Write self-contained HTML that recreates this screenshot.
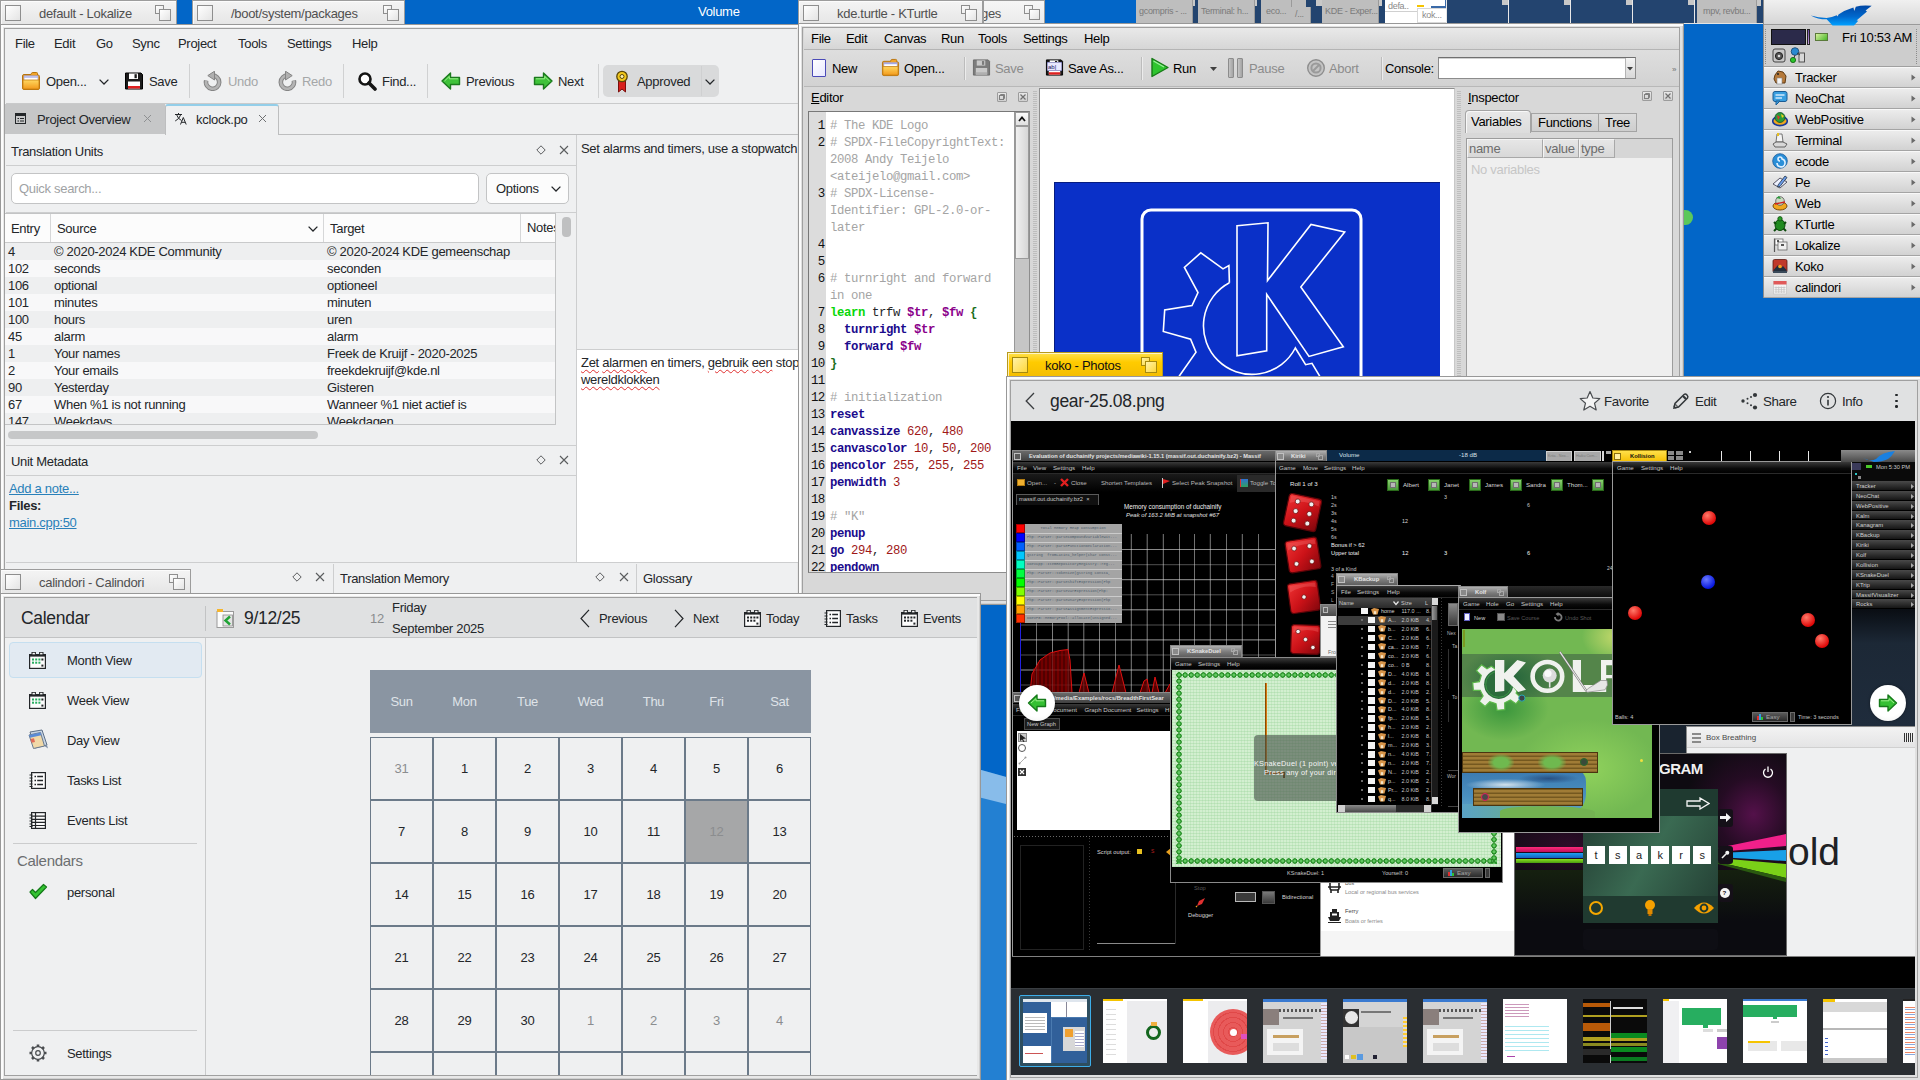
<!DOCTYPE html>
<html><head><meta charset="utf-8"><title>desktop</title>
<style>
html,body{margin:0;padding:0}
body{width:1920px;height:1080px;overflow:hidden;position:relative;background:#0266c8;font-family:"Liberation Sans",sans-serif;font-size:13px;color:#232629}
.a{position:absolute;box-sizing:border-box}
.t{position:absolute;white-space:pre;font-size:13px;letter-spacing:-.3px;line-height:16px;color:#232629}
.m{position:absolute;white-space:pre;font-family:"Liberation Mono",monospace;font-size:12.3px;letter-spacing:-.38px;line-height:17px;color:#232629}
.g{color:#9a9b9c}
.w{overflow:hidden}
</style></head><body>

<svg class="a" style="left:976px;top:740px" width="40" height="340" viewBox="976 740 40 340"><path d="M976 768.6L1016 779.8V1080H976Z" fill="#2380d2"/><path d="M976 768.6L1016 779.8V806.5L976 796.4Z" fill="#88bcea"/></svg>
<div class="a" style="left:0px;top:0px;width:177px;height:24px;background:linear-gradient(#f4f4f4,#e6e6e6);border:1px solid #9c9c9c;border-bottom:none;box-shadow:inset 1px 1px 0 rgba(255,255,255,.7)"></div>
<div class="a" style="left:5px;top:5px;width:16px;height:16px;background:linear-gradient(135deg,#ffffff,#e4e4e4);border:1px solid #8e8e8e"></div>
<div class="a" style="left:155px;top:5px;width:9px;height:9px;background:linear-gradient(135deg,#ffffff,#e4e4e4);border:1px solid #8e8e8e"></div>
<div class="a" style="left:159px;top:9px;width:12px;height:12px;background:linear-gradient(135deg,#ffffff,#e4e4e4);border:1px solid #8e8e8e"></div>
<span class="t" style="left:39px;top:6px;color:#505050">default - Lokalize</span>
<div class="a" style="left:192px;top:0px;width:213px;height:24px;background:linear-gradient(#f4f4f4,#e6e6e6);border:1px solid #9c9c9c;border-bottom:none;box-shadow:inset 1px 1px 0 rgba(255,255,255,.7)"></div>
<div class="a" style="left:197px;top:5px;width:16px;height:16px;background:linear-gradient(135deg,#ffffff,#e4e4e4);border:1px solid #8e8e8e"></div>
<div class="a" style="left:383px;top:5px;width:9px;height:9px;background:linear-gradient(135deg,#ffffff,#e4e4e4);border:1px solid #8e8e8e"></div>
<div class="a" style="left:387px;top:9px;width:12px;height:12px;background:linear-gradient(135deg,#ffffff,#e4e4e4);border:1px solid #8e8e8e"></div>
<span class="t" style="left:231px;top:6px;color:#505050">/boot/system/packages</span>
<span class="t" style="left:698px;top:4px;color:#fff">Volume</span>
<div class="a" style="left:0px;top:24px;width:801px;height:600px;background:#e8e8e8;border:1px solid #989898;box-shadow:inset 2px 2px 0 #fcfcfc, inset -1px -1px 0 #d0d0d0"></div>
<div class="a" style="left:4px;top:28px;width:793px;height:592px;border:1px solid #a0a0a0;background:transparent"></div>
<div class="a" style="left:5px;top:29px;width:792px;height:590px;background:#eff0f1"></div>
<span class="t" style="left:15px;top:36px;">File</span>
<span class="t" style="left:54px;top:36px;">Edit</span>
<span class="t" style="left:96px;top:36px;">Go</span>
<span class="t" style="left:132px;top:36px;">Sync</span>
<span class="t" style="left:178px;top:36px;">Project</span>
<span class="t" style="left:238px;top:36px;">Tools</span>
<span class="t" style="left:287px;top:36px;">Settings</span>
<span class="t" style="left:352px;top:36px;">Help</span>
<svg class="a" style="left:21px;top:71px;" width="20" height="20" viewBox="0 0 20 20"><defs><linearGradient id="fo" x1="0" y1="0" x2="0" y2="1"><stop offset="0" stop-color="#ffd860"/><stop offset="1" stop-color="#f39a1c"/></linearGradient></defs>
<path d="M1.5 5 L1.5 17 Q1.5 18.5 3 18.5 L17 18.5 Q18.5 18.5 18.5 17 L18.5 5.5 Q18.5 4 17 4 L16.5 4 L16.5 2.5 Q16.5 1.5 15.5 1.5L11.5 1.5 Q10.8 1.5 10.5 2.2 L10 3.5 L3 3.5 Q1.5 3.5 1.5 5Z" fill="#f0a42a" stroke="#b8740e" stroke-width="1"/>
<rect x="3" y="4.8" width="14" height="4.5" fill="#fff" stroke="#8a8ac8" stroke-width=".6"/><path d="M3.3 6H16.7" stroke="#6a72d8" stroke-width=".8"/>
<path d="M2 9 L18 9 L18 17 Q18 18 17 18 L3 18 Q2 18 2 17Z" fill="url(#fo)" stroke="#c98212" stroke-width=".8"/></svg>
<span class="t" style="left:46px;top:74px;">Open...</span>
<svg class="a" style="left:99px;top:79px;" width="10" height="6" viewBox="0 0 10 6"><path d="M.6 .6 L5.0 5 L9.4 .6" fill="none" stroke="#232629" stroke-width="1.3"/></svg>
<svg class="a" style="left:124px;top:71px;" width="20" height="20" viewBox="0 0 20 20"><path d="M1.5 2 L17 2 L18.5 3.5 L18.5 18 L1.5 18Z" fill="#1b1b1b" stroke="#000" stroke-width="1"/>
<rect x="5" y="2.5" width="9" height="5.5" fill="#ffffff"/><rect x="10.5" y="3.2" width="2.3" height="4" fill="#1b1b1b"/>
<rect x="4" y="10.5" width="12" height="7" fill="#ffffff"/><rect x="4" y="15" width="12" height="2.5" fill="#e02020"/></svg>
<span class="t" style="left:149px;top:74px;">Save</span>
<div class="a" style="left:189px;top:64px;width:1px;height:34px;background:#d0d1d2"></div>
<svg class="a" style="left:203px;top:71px;" width="20" height="20" viewBox="0 0 20 20"><g ><path d="M3.2 9.5 A6.6 6.6 0 1 0 9 4.6" fill="none" stroke="#858585" stroke-width="4.6"/>
<path d="M3.2 9.5 A6.6 6.6 0 1 0 9 4.6" fill="none" stroke="#b4b4b4" stroke-width="2.6"/>
<path d="M11.5 .2 L11.5 9 L4.8 4.6Z" fill="#b0b0b0" stroke="#858585" stroke-width="1" stroke-linejoin="round"/></g></svg>
<span class="t" style="left:228px;top:74px;color:#a5a7a8">Undo</span>
<svg class="a" style="left:277px;top:71px;" width="20" height="20" viewBox="0 0 20 20"><g transform="translate(20,0) scale(-1,1)"><path d="M3.2 9.5 A6.6 6.6 0 1 0 9 4.6" fill="none" stroke="#858585" stroke-width="4.6"/>
<path d="M3.2 9.5 A6.6 6.6 0 1 0 9 4.6" fill="none" stroke="#b4b4b4" stroke-width="2.6"/>
<path d="M11.5 .2 L11.5 9 L4.8 4.6Z" fill="#b0b0b0" stroke="#858585" stroke-width="1" stroke-linejoin="round"/></g></svg>
<span class="t" style="left:302px;top:74px;color:#a5a7a8">Redo</span>
<div class="a" style="left:343px;top:64px;width:1px;height:34px;background:#d0d1d2"></div>
<svg class="a" style="left:357px;top:71px;" width="20" height="20" viewBox="0 0 20 20"><circle cx="8" cy="8" r="5.5" fill="#fff" stroke="#151515" stroke-width="2.6"/>
<path d="M12 12 L18 18" stroke="#151515" stroke-width="3.6" stroke-linecap="round"/></svg>
<span class="t" style="left:382px;top:74px;">Find...</span>
<div class="a" style="left:427px;top:64px;width:1px;height:34px;background:#d0d1d2"></div>
<svg class="a" style="left:441px;top:71px;" width="20" height="20" viewBox="0 0 20 20"><g ><path d="M1 10 L9.5 2 L9.5 6.5 L18.5 6.5 L18.5 13.5 L9.5 13.5 L9.5 18Z" fill="#3fc23a" stroke="#1b7a1d" stroke-width="1.4" stroke-linejoin="round"/>
<path d="M3.5 10 L8.3 5.4 L8.3 7.8 L17.2 7.8" fill="none" stroke="#9cf08a" stroke-width="1"/></g></svg>
<span class="t" style="left:466px;top:74px;">Previous</span>
<svg class="a" style="left:533px;top:71px;" width="20" height="20" viewBox="0 0 20 20"><g transform="translate(20,0) scale(-1,1)"><path d="M1 10 L9.5 2 L9.5 6.5 L18.5 6.5 L18.5 13.5 L9.5 13.5 L9.5 18Z" fill="#3fc23a" stroke="#1b7a1d" stroke-width="1.4" stroke-linejoin="round"/>
<path d="M3.5 10 L8.3 5.4 L8.3 7.8 L17.2 7.8" fill="none" stroke="#9cf08a" stroke-width="1"/></g></svg>
<span class="t" style="left:558px;top:74px;">Next</span>
<div class="a" style="left:598px;top:64px;width:1px;height:34px;background:#d0d1d2"></div>
<div class="a" style="left:603px;top:65px;width:116px;height:32px;background:#d9dadb;border-radius:5px"></div>
<div class="a" style="left:701px;top:66px;width:1px;height:30px;background:#cfd0d1"></div>
<svg class="a" style="left:615px;top:70px;" width="14" height="24" viewBox="0 0 14 24"><path d="M3.5 9 L3.5 22 L7 19 L10.5 22 L10.5 9Z" fill="#d8201c" stroke="#7a0e0c" stroke-width="1"/>
<circle cx="7" cy="6.5" r="5.2" fill="#f2c81c" stroke="#5a4708" stroke-width="1.3"/><circle cx="7" cy="6.5" r="2" fill="#fff4b0" stroke="#5a4708" stroke-width="1"/></svg>
<span class="t" style="left:637px;top:74px;">Approved</span>
<svg class="a" style="left:705px;top:79px;" width="10" height="6" viewBox="0 0 10 6"><path d="M.6 .6 L5.0 5 L9.4 .6" fill="none" stroke="#232629" stroke-width="1.3"/></svg>
<div class="a" style="left:6px;top:103px;width:792px;height:1px;background:#c9cacb"></div>
<div class="a" style="left:5px;top:104px;width:160px;height:30px;background:#c6c7c8"></div>
<div class="a" style="left:165px;top:104px;width:114px;height:31px;background:#eff0f1;border:1px solid #bdbebf;border-bottom:none;border-top:2px solid #93cee9;border-radius:3px 3px 0 0"></div>
<div class="a" style="left:278px;top:134px;width:520px;height:1px;background:#bdbebf"></div>
<svg class="a" style="left:15px;top:113px;" width="11" height="11" viewBox="0 0 11 11"><rect x=".5" y=".5" width="10" height="10" fill="none" stroke="#232629"/><rect x=".5" y=".5" width="10" height="2.5" fill="#232629"/><path d="M2.5 5.5H4M5 5.5H9M2.5 8H4M5 8H9" stroke="#232629"/></svg>
<span class="t" style="left:37px;top:112px;">Project Overview</span>
<svg class="a" style="left:143px;top:114px;" width="9" height="9" viewBox="0 0 9 9"><path d="M1 1 L8 8 M8 1 L1 8" stroke="#8e9092" stroke-width="1"/></svg>
<svg class="a" style="left:174px;top:112px;" width="13" height="13" viewBox="0 0 13 13"><path d="M1 2.5H8M4.5 1V2.5M2.5 2.5Q4 7 7.5 8.5M6.8 2.5Q5.5 7 1.2 9" fill="none" stroke="#232629" stroke-width="1"/><path d="M6.5 12.5L9.3 5.5L12.2 12.5M7.5 10.3H11.2" fill="none" stroke="#232629" stroke-width="1"/></svg>
<span class="t" style="left:196px;top:112px;">kclock.po</span>
<svg class="a" style="left:258px;top:114px;" width="9" height="9" viewBox="0 0 9 9"><path d="M1 1 L8 8 M8 1 L1 8" stroke="#6e7072" stroke-width="1"/></svg>
<span class="t" style="left:11px;top:144px;">Translation Units</span>
<svg class="a" style="left:536px;top:145px;" width="10" height="10" viewBox="0 0 10 10"><path d="M5 .8 L9.2 5 L5 9.2 L.8 5Z" fill="none" stroke="#5a5c5e" stroke-width="1"/></svg>
<svg class="a" style="left:559px;top:145px;" width="10" height="10" viewBox="0 0 10 10"><path d="M1 1 L9 9 M9 1 L1 9" fill="none" stroke="#5a5c5e" stroke-width="1.1"/></svg>
<div class="a" style="left:6px;top:165px;width:570px;height:1px;background:#cdcecf"></div>
<div class="a" style="left:11px;top:173px;width:468px;height:31px;background:#fff;border:1px solid #c3c4c5;border-radius:5px"></div>
<span class="t" style="left:19px;top:181px;color:#a0a2a4">Quick search...</span>
<div class="a" style="left:486px;top:173px;width:83px;height:31px;background:#fcfcfc;border:1px solid #c3c4c5;border-radius:5px"></div>
<span class="t" style="left:496px;top:181px;">Options</span>
<svg class="a" style="left:551px;top:186px;" width="10" height="6" viewBox="0 0 10 6"><path d="M.6 .6 L5.0 5 L9.4 .6" fill="none" stroke="#232629" stroke-width="1.3"/></svg>
<div class="a" style="left:6px;top:212px;width:570px;height:1px;background:#cdcecf"></div>
<div class="a" style="left:5px;top:213px;width:551px;height:212px;background:#fcfcfc;border:1px solid #c3c4c5;border-left:none"></div>
<div class="a" style="left:5px;top:242px;width:550px;height:1px;background:#c9cacb"></div>
<div class="a" style="left:50px;top:214px;width:1px;height:28px;background:#d6d7d8"></div>
<div class="a" style="left:323px;top:214px;width:1px;height:28px;background:#d6d7d8"></div>
<div class="a" style="left:520px;top:214px;width:1px;height:28px;background:#d6d7d8"></div>
<span class="t" style="left:11px;top:221px;">Entry</span>
<span class="t" style="left:57px;top:221px;">Source</span>
<svg class="a" style="left:308px;top:226px;" width="10" height="6" viewBox="0 0 10 6"><path d="M.6 .6 L5.0 5 L9.4 .6" fill="none" stroke="#232629" stroke-width="1.3"/></svg>
<span class="t" style="left:330px;top:221px;">Target</span>
<div class="a w" style="left:521px;top:214px;width:34px;height:28px"><span class="t" style="left:6px;top:6px">Notes</span></div>
<div class="a w" style="left:5px;top:243px;width:550px;height:181px">
<div class="a" style="left:0;top:0px;width:550px;height:17px;background:#eeeff0"></div>
<span class="t" style="left:3px;top:1px">4</span>
<span class="t" style="left:49px;top:1px">© 2020-2024 KDE Community</span>
<span class="t" style="left:322px;top:1px">© 2020-2024 KDE gemeenschap</span>
<div class="a" style="left:0;top:17px;width:550px;height:17px;background:#f8f8f9"></div>
<span class="t" style="left:3px;top:18px">102</span>
<span class="t" style="left:49px;top:18px">seconds</span>
<span class="t" style="left:322px;top:18px">seconden</span>
<div class="a" style="left:0;top:34px;width:550px;height:17px;background:#eeeff0"></div>
<span class="t" style="left:3px;top:35px">106</span>
<span class="t" style="left:49px;top:35px">optional</span>
<span class="t" style="left:322px;top:35px">optioneel</span>
<div class="a" style="left:0;top:51px;width:550px;height:17px;background:#f8f8f9"></div>
<span class="t" style="left:3px;top:52px">101</span>
<span class="t" style="left:49px;top:52px">minutes</span>
<span class="t" style="left:322px;top:52px">minuten</span>
<div class="a" style="left:0;top:68px;width:550px;height:17px;background:#eeeff0"></div>
<span class="t" style="left:3px;top:69px">100</span>
<span class="t" style="left:49px;top:69px">hours</span>
<span class="t" style="left:322px;top:69px">uren</span>
<div class="a" style="left:0;top:85px;width:550px;height:17px;background:#f8f8f9"></div>
<span class="t" style="left:3px;top:86px">45</span>
<span class="t" style="left:49px;top:86px">alarm</span>
<span class="t" style="left:322px;top:86px">alarm</span>
<div class="a" style="left:0;top:102px;width:550px;height:17px;background:#eeeff0"></div>
<span class="t" style="left:3px;top:103px">1</span>
<span class="t" style="left:49px;top:103px">Your names</span>
<span class="t" style="left:322px;top:103px">Freek de Kruijf - 2020-2025</span>
<div class="a" style="left:0;top:119px;width:550px;height:17px;background:#f8f8f9"></div>
<span class="t" style="left:3px;top:120px">2</span>
<span class="t" style="left:49px;top:120px">Your emails</span>
<span class="t" style="left:322px;top:120px">freekdekruijf@kde.nl</span>
<div class="a" style="left:0;top:136px;width:550px;height:17px;background:#eeeff0"></div>
<span class="t" style="left:3px;top:137px">90</span>
<span class="t" style="left:49px;top:137px">Yesterday</span>
<span class="t" style="left:322px;top:137px">Gisteren</span>
<div class="a" style="left:0;top:153px;width:550px;height:17px;background:#f8f8f9"></div>
<span class="t" style="left:3px;top:154px">67</span>
<span class="t" style="left:49px;top:154px">When %1 is not running</span>
<span class="t" style="left:322px;top:154px">Wanneer %1 niet actief is</span>
<div class="a" style="left:0;top:170px;width:550px;height:17px;background:#eeeff0"></div>
<span class="t" style="left:3px;top:171px">147</span>
<span class="t" style="left:49px;top:171px">Weekdays</span>
<span class="t" style="left:322px;top:171px">Weekdagen</span>
</div>
<div class="a" style="left:562px;top:217px;width:9px;height:20px;background:#bfc0c1;border-radius:4px"></div>
<div class="a" style="left:8px;top:431px;width:310px;height:8px;background:#c6c7c8;border-radius:4px"></div>
<div class="a" style="left:6px;top:445px;width:570px;height:1px;background:#cdcecf"></div>
<span class="t" style="left:11px;top:454px;">Unit Metadata</span>
<svg class="a" style="left:536px;top:455px;" width="10" height="10" viewBox="0 0 10 10"><path d="M5 .8 L9.2 5 L5 9.2 L.8 5Z" fill="none" stroke="#5a5c5e" stroke-width="1"/></svg>
<svg class="a" style="left:559px;top:455px;" width="10" height="10" viewBox="0 0 10 10"><path d="M1 1 L9 9 M9 1 L1 9" fill="none" stroke="#5a5c5e" stroke-width="1.1"/></svg>
<div class="a" style="left:6px;top:475px;width:570px;height:1px;background:#cdcecf"></div>
<span class="t" style="left:9px;top:481px;color:#2980b9;text-decoration:underline">Add a note...</span>
<span class="t" style="left:9px;top:498px;font-weight:bold">Files:</span>
<span class="t" style="left:9px;top:515px;color:#2980b9;text-decoration:underline">main.cpp:50</span>
<div class="a" style="left:576px;top:135px;width:1px;height:428px;background:#cdcecf"></div>
<div class="a w" style="left:577px;top:135px;width:221px;height:215px"><span class="t" style="left:4px;top:6px">Set alarms and timers, use a stopwatch, and</span></div>
<div class="a" style="left:577px;top:349px;width:221px;height:1px;background:#cdcecf"></div>
<div class="a" style="left:577px;top:350px;width:221px;height:212px;background:#fff"></div>
<div class="a w" style="left:577px;top:350px;width:221px;height:60px"><span class="t" style="left:4px;top:5px"><u style="text-decoration:underline wavy #e03030 1px;text-underline-offset:2px">Zet</u> <u style="text-decoration:underline wavy #e03030 1px;text-underline-offset:2px">alarmen</u> en timers, <u style="text-decoration:underline wavy #e03030 1px;text-underline-offset:2px">gebruik</u> <u style="text-decoration:underline wavy #e03030 1px;text-underline-offset:2px">een</u> stopwatch</span><span class="t" style="left:4px;top:22px"><u style="text-decoration:underline wavy #e03030 1px;text-underline-offset:2px">wereldklokken</u></span></div>
<div class="a" style="left:6px;top:562px;width:792px;height:1px;background:#cdcecf"></div>
<svg class="a" style="left:292px;top:572px;" width="10" height="10" viewBox="0 0 10 10"><path d="M5 .8 L9.2 5 L5 9.2 L.8 5Z" fill="none" stroke="#5a5c5e" stroke-width="1"/></svg>
<svg class="a" style="left:315px;top:572px;" width="10" height="10" viewBox="0 0 10 10"><path d="M1 1 L9 9 M9 1 L1 9" fill="none" stroke="#5a5c5e" stroke-width="1.1"/></svg>
<div class="a" style="left:333px;top:564px;width:1px;height:29px;background:#cdcecf"></div>
<span class="t" style="left:340px;top:571px;">Translation Memory</span>
<svg class="a" style="left:595px;top:572px;" width="10" height="10" viewBox="0 0 10 10"><path d="M5 .8 L9.2 5 L5 9.2 L.8 5Z" fill="none" stroke="#5a5c5e" stroke-width="1"/></svg>
<svg class="a" style="left:619px;top:572px;" width="10" height="10" viewBox="0 0 10 10"><path d="M1 1 L9 9 M9 1 L1 9" fill="none" stroke="#5a5c5e" stroke-width="1.1"/></svg>
<div class="a" style="left:636px;top:564px;width:1px;height:29px;background:#cdcecf"></div>
<span class="t" style="left:643px;top:571px;">Glossary</span>
<div class="a" style="left:6px;top:593px;width:792px;height:1px;background:#b5b6b7"></div>
<div class="a" style="left:1136px;top:0px;width:627px;height:24px;background:#23446f"></div>
<div class="a" style="left:1136px;top:0px;width:57px;height:23px;background:#bebebe;border-right:1px solid #9a9a9a;overflow:hidden"><span class="t" style="left:3px;top:6px;font-size:9px;letter-spacing:-.3px;color:#7a7a7a;line-height:10px">gcompris - ...</span></div>
<div class="a" style="left:1193px;top:0px;width:2px;height:6px;background:#c8c8c8"></div>
<div class="a" style="left:1198px;top:0px;width:57px;height:23px;background:#bebebe;border-right:1px solid #9a9a9a;overflow:hidden"><span class="t" style="left:3px;top:6px;font-size:9px;letter-spacing:-.3px;color:#7a7a7a;line-height:10px">Terminal: h...</span></div>
<div class="a" style="left:1255px;top:0px;width:2px;height:6px;background:#c8c8c8"></div>
<div class="a" style="left:1261px;top:0px;width:31px;height:23px;background:#bebebe;border-right:1px solid #9a9a9a;overflow:hidden"><span class="t" style="left:5px;top:6px;font-size:9px;letter-spacing:-.3px;color:#7a7a7a;line-height:10px">eco...</span></div>
<div class="a" style="left:1291px;top:7px;width:20px;height:16px;background:#bebebe;border-right:1px solid #9a9a9a;overflow:hidden"><span class="t" style="left:4px;top:2px;font-size:9px;letter-spacing:-.3px;color:#7a7a7a;line-height:10px">/...</span></div>
<div class="a" style="left:1292px;top:0px;width:14px;height:7px;background:#bebebe"></div>
<div class="a" style="left:1316px;top:0px;width:6px;height:6px;background:#c8c8c8"></div>
<div class="a" style="left:1322px;top:0px;width:57px;height:23px;background:#bebebe;border-right:1px solid #9a9a9a;overflow:hidden"><span class="t" style="left:3px;top:6px;font-size:9px;letter-spacing:-.3px;color:#7a7a7a;line-height:10px">KDE - Exper...</span></div>
<div class="a" style="left:1379px;top:0px;width:3px;height:6px;background:#c8c8c8"></div>
<div class="a" style="left:1385px;top:0px;width:62px;height:23px;background:#fff"></div>
<div class="a" style="left:1385px;top:0px;width:32px;height:12px;background:#fff;border-bottom:1px solid #d0d0d0"><span class="t" style="left:3px;top:1px;font-size:9px;letter-spacing:-.3px;color:#7a7a7a;line-height:10px;color:#8a8a8a">defa..</span></div>
<div class="a" style="left:1417px;top:8px;width:30px;height:15px;background:#fff;border:1px solid #d8d8d8"><span class="t" style="left:4px;top:1px;font-size:9px;letter-spacing:-.3px;color:#7a7a7a;line-height:10px;color:#8a8a8a">kok...</span></div>
<div class="a" style="left:1417px;top:5px;width:7px;height:2px;background:#f5c400"></div>
<div class="a" style="left:1431px;top:0px;width:16px;height:8px;background:#fff;border-right:2px solid #3a6aa8;border-bottom:2px solid #3a6aa8"></div>
<div class="a" style="left:1508px;top:0px;width:1px;height:23px;background:#e8e8e8"></div>
<div class="a" style="left:1502px;top:0px;width:6px;height:5px;background:#c8c8c8"></div>
<div class="a" style="left:1570px;top:0px;width:1px;height:23px;background:#e8e8e8"></div>
<div class="a" style="left:1564px;top:0px;width:6px;height:5px;background:#c8c8c8"></div>
<div class="a" style="left:1632px;top:0px;width:1px;height:23px;background:#e8e8e8"></div>
<div class="a" style="left:1626px;top:0px;width:6px;height:5px;background:#c8c8c8"></div>
<div class="a" style="left:1694px;top:0px;width:1px;height:23px;background:#e8e8e8"></div>
<div class="a" style="left:1688px;top:0px;width:6px;height:5px;background:#c8c8c8"></div>
<div class="a" style="left:1446px;top:0px;width:1px;height:23px;background:#e8e8e8"></div>
<div class="a" style="left:1697px;top:0px;width:60px;height:23px;background:#bebebe;border-right:1px solid #9a9a9a;overflow:hidden"><span class="t" style="left:6px;top:6px;font-size:9px;letter-spacing:-.3px;color:#7a7a7a;line-height:10px">mpv, revbu...</span></div>
<div class="a" style="left:1757px;top:0px;width:4px;height:6px;background:#c8c8c8"></div>
<div class="a" style="left:1136px;top:23px;width:627px;height:1px;background:#e4e4e4"></div>
<div class="a" style="left:983px;top:0px;width:62px;height:24px;background:linear-gradient(#f6f6f6,#ebebeb);border:1px solid #9c9c9c;border-bottom:none"></div>
<div class="a" style="left:1024px;top:5px;width:9px;height:9px;background:linear-gradient(135deg,#fff,#e4e4e4);border:1px solid #8e8e8e"></div>
<div class="a" style="left:1029px;top:9px;width:11px;height:11px;background:linear-gradient(135deg,#fff,#e4e4e4);border:1px solid #8e8e8e"></div>
<div class="a w" style="left:984px;top:2px;width:40px;height:20px"><span class="t" style="left:-3px;top:4px;color:#505050">ges</span></div>
<div class="a" style="left:798px;top:0px;width:185px;height:24px;background:linear-gradient(#f4f4f4,#e6e6e6);border:1px solid #9c9c9c;border-bottom:none;box-shadow:inset 1px 1px 0 rgba(255,255,255,.7)"></div>
<div class="a" style="left:803px;top:5px;width:16px;height:16px;background:linear-gradient(135deg,#ffffff,#e4e4e4);border:1px solid #8e8e8e"></div>
<div class="a" style="left:961px;top:5px;width:9px;height:9px;background:linear-gradient(135deg,#ffffff,#e4e4e4);border:1px solid #8e8e8e"></div>
<div class="a" style="left:965px;top:9px;width:12px;height:12px;background:linear-gradient(135deg,#ffffff,#e4e4e4);border:1px solid #8e8e8e"></div>
<span class="t" style="left:837px;top:6px;color:#505050">kde.turtle - KTurtle</span>
<div class="a" style="left:798px;top:23px;width:886px;height:582px;background:#e0e0e0;border:1px solid #989898;box-shadow:inset 2px 2px 0 #fcfcfc, inset -1px -1px 0 #d0d0d0"></div>
<div class="a" style="left:802px;top:27px;width:878px;height:574px;border:1px solid #a0a0a0;background:transparent"></div>
<div class="a" style="left:803px;top:28px;width:876px;height:572px;background:#d8d8d8"></div>
<div class="a" style="left:804px;top:28px;width:875px;height:22px;background:linear-gradient(#e9e9e9,#d6d6d6);border-bottom:1px solid #b4b4b4"></div>
<span class="t" style="left:811px;top:31px;color:#000">File</span>
<span class="t" style="left:846px;top:31px;color:#000">Edit</span>
<span class="t" style="left:884px;top:31px;color:#000">Canvas</span>
<span class="t" style="left:941px;top:31px;color:#000">Run</span>
<span class="t" style="left:978px;top:31px;color:#000">Tools</span>
<span class="t" style="left:1023px;top:31px;color:#000">Settings</span>
<span class="t" style="left:1084px;top:31px;color:#000">Help</span>
<div class="a" style="left:804px;top:50px;width:875px;height:37px;background:linear-gradient(#dedede,#d2d2d2);border-bottom:1px solid #b8b8b8"></div>
<div class="a" style="left:812px;top:59px;width:14px;height:18px;background:linear-gradient(135deg,#fff,#e8e8ff);border:1.5px solid #4a4ab8;border-radius:1px"></div>
<span class="t" style="left:832px;top:61px;color:#000">New</span>
<svg class="a" style="left:881px;top:58px;" width="19" height="19" viewBox="0 0 20 20"><defs><linearGradient id="fo" x1="0" y1="0" x2="0" y2="1"><stop offset="0" stop-color="#ffd860"/><stop offset="1" stop-color="#f39a1c"/></linearGradient></defs>
<path d="M1.5 5 L1.5 17 Q1.5 18.5 3 18.5 L17 18.5 Q18.5 18.5 18.5 17 L18.5 5.5 Q18.5 4 17 4 L16.5 4 L16.5 2.5 Q16.5 1.5 15.5 1.5L11.5 1.5 Q10.8 1.5 10.5 2.2 L10 3.5 L3 3.5 Q1.5 3.5 1.5 5Z" fill="#f0a42a" stroke="#b8740e" stroke-width="1"/>
<rect x="3" y="4.8" width="14" height="4.5" fill="#fff" stroke="#8a8ac8" stroke-width=".6"/><path d="M3.3 6H16.7" stroke="#6a72d8" stroke-width=".8"/>
<path d="M2 9 L18 9 L18 17 Q18 18 17 18 L3 18 Q2 18 2 17Z" fill="url(#fo)" stroke="#c98212" stroke-width=".8"/></svg>
<span class="t" style="left:904px;top:61px;color:#000">Open...</span>
<div class="a" style="left:964px;top:57px;width:1px;height:23px;background:#bcbcbc"></div>
<div class="a" style="left:965px;top:57px;width:1px;height:23px;background:#ececec"></div>
<svg class="a" style="left:972px;top:58px;" width="19" height="19" viewBox="0 0 20 20"><path d="M1.5 2 L17 2 L18.5 3.5 L18.5 18 L1.5 18Z" fill="#7c7c7c" stroke="#6a6a6a" stroke-width="1"/>
<rect x="5" y="2.5" width="9" height="5.5" fill="#c9c9c9"/><rect x="10.5" y="3.2" width="2.3" height="4" fill="#7c7c7c"/>
<rect x="4" y="10.5" width="12" height="7" fill="#c9c9c9"/><rect x="4" y="15" width="12" height="2.5" fill="#b0b0b0"/></svg>
<span class="t" style="left:995px;top:61px;color:#8c8c8c">Save</span>
<svg class="a" style="left:1045px;top:58px;" width="19" height="19" viewBox="0 0 20 20"><path d="M1.5 2 L17 2 L18.5 3.5 L18.5 18 L1.5 18Z" fill="#1b1b1b" stroke="#000" stroke-width="1"/>
<rect x="5" y="2.5" width="9" height="5.5" fill="#ffffff"/><rect x="10.5" y="3.2" width="2.3" height="4" fill="#1b1b1b"/>
<rect x="4" y="10.5" width="12" height="7" fill="#ffffff"/><rect x="4" y="15" width="12" height="2.5" fill="#e02020"/></svg>
<svg class="a" style="left:1047px;top:62px;" width="15" height="9" viewBox="0 0 15 9"><rect x="0" y="0" width="15" height="9" fill="#e8e8ff" stroke="#303080" stroke-width=".8"/><text x="1" y="7" font-size="6" font-family="Liberation Sans" fill="#101060">ab|</text></svg>
<span class="t" style="left:1068px;top:61px;color:#000">Save As...</span>
<div class="a" style="left:1141px;top:57px;width:1px;height:23px;background:#bcbcbc"></div>
<div class="a" style="left:1142px;top:57px;width:1px;height:23px;background:#ececec"></div>
<svg class="a" style="left:1150px;top:57px;" width="20" height="21" viewBox="0 0 20 21"><path d="M2 1.5 L18 10.5 L2 19.5Z" fill="#2ec42e" stroke="#167a16" stroke-width="1.4" stroke-linejoin="round"/><path d="M3.5 4 L14 10" stroke="#9af09a" stroke-width="1.2"/></svg>
<span class="t" style="left:1173px;top:61px;color:#000">Run</span>
<svg class="a" style="left:1210px;top:67px;" width="7" height="4" viewBox="0 0 7 4"><path d="M0 0H7L3.5 4Z" fill="#404040"/></svg>
<div class="a" style="left:1228px;top:58px;width:6px;height:20px;background:linear-gradient(90deg,#c4c4c4,#a4a4a4);border:1px solid #8c8c8c;border-radius:1px"></div>
<div class="a" style="left:1237px;top:58px;width:6px;height:20px;background:linear-gradient(90deg,#c4c4c4,#a4a4a4);border:1px solid #8c8c8c;border-radius:1px"></div>
<span class="t" style="left:1249px;top:61px;color:#8c8c8c">Pause</span>
<svg class="a" style="left:1306px;top:58px;" width="20" height="20" viewBox="0 0 20 20"><circle cx="10" cy="10" r="8.3" fill="#c4c4c4" stroke="#8e8e8e" stroke-width="1.4"/><circle cx="10" cy="10" r="4.6" fill="none" stroke="#9a9a9a" stroke-width="2"/><path d="M6.5 13.5 L13.5 6.5" stroke="#9a9a9a" stroke-width="2"/></svg>
<span class="t" style="left:1329px;top:61px;color:#8c8c8c">Abort</span>
<div class="a" style="left:1381px;top:57px;width:1px;height:23px;background:#bcbcbc"></div>
<div class="a" style="left:1382px;top:57px;width:1px;height:23px;background:#ececec"></div>
<span class="t" style="left:1385px;top:61px;color:#000">Console:</span>
<div class="a" style="left:1438px;top:57px;width:198px;height:22px;background:#fff;border:1px solid #8c8c8c;border-top-color:#707070;box-shadow:inset 0 1px 0 #d0d0d0"></div>
<div class="a" style="left:1625px;top:58px;width:10px;height:20px;background:linear-gradient(#f4f4f4,#d8d8d8);border-left:1px solid #b4b4b4"></div>
<svg class="a" style="left:1627px;top:67px;" width="6" height="4" viewBox="0 0 6 4"><path d="M0 0H6L3 3.5Z" fill="#404040"/></svg>
<span class="t" style="left:1672px;top:62px;font-size:8px;color:#707070">»</span>
<span class="t" style="left:811px;top:90px;color:#000"><u>E</u>ditor</span>
<div class="a" style="left:997px;top:92px;width:10px;height:10px;border:1px solid #9c9c9c;background:linear-gradient(#e8e8e8,#cfcfcf);border-radius:1px"></div>
<div class="a" style="left:1018px;top:92px;width:10px;height:10px;border:1px solid #9c9c9c;background:linear-gradient(#e8e8e8,#cfcfcf);border-radius:1px"></div>
<svg class="a" style="left:999px;top:94px;" width="6" height="6" viewBox="0 0 6 6"><rect x=".5" y="1.5" width="4" height="4" fill="none" stroke="#808080"/><path d="M1.5 1.5V.5H5.5V4.5H4.5" fill="none" stroke="#808080"/></svg>
<svg class="a" style="left:1020px;top:94px;" width="6" height="6" viewBox="0 0 6 6"><path d="M.5 .5L5.5 5.5M5.5 .5L.5 5.5" stroke="#707070" stroke-width="1.2"/></svg>
<div class="a" style="left:808px;top:111px;width:222px;height:462px;background:#fff;border:1px solid #8e8e8e;border-top-color:#787878;border-left-color:#787878"></div>
<div class="a" style="left:809px;top:112px;width:17px;height:460px;background:#dcdcdc"></div>
<div class="a" style="left:1014px;top:112px;width:15px;height:460px;background:#c6c6c6;border-left:1px solid #989898"></div>
<div class="a" style="left:1015px;top:112px;width:14px;height:14px;background:linear-gradient(#fafafa,#e0e0e0);border:1px solid #9a9a9a"></div>
<svg class="a" style="left:1018px;top:116px;" width="8" height="6" viewBox="0 0 8 6"><path d="M1 5L4 1.5L7 5" fill="none" stroke="#111" stroke-width="1.8"/></svg>
<div class="a" style="left:1015px;top:126px;width:14px;height:133px;background:linear-gradient(90deg,#f0f0f0,#d6d6d6);border:1px solid #9a9a9a"></div>
<div class="a w" style="left:0;top:112px;width:1014px;height:460px"><div class="a" style="left:0;top:-112px">
<span class="m" style="left:807px;top:118px;width:17.5px;text-align:right;letter-spacing:-.7px;font-size:12.5px;color:#111">1</span>
<span class="m" style="left:830px;top:118px"><span style="color:#a4a4a4"># The KDE Logo</span></span>
<span class="m" style="left:807px;top:135px;width:17.5px;text-align:right;letter-spacing:-.7px;font-size:12.5px;color:#111">2</span>
<span class="m" style="left:830px;top:135px"><span style="color:#a4a4a4"># SPDX-FileCopyrightText:</span></span>
<span class="m" style="left:830px;top:152px"><span style="color:#a4a4a4">2008 Andy Teijelo</span></span>
<span class="m" style="left:830px;top:169px"><span style="color:#a4a4a4">&lt;ateijelo@gmail.com&gt;</span></span>
<span class="m" style="left:807px;top:186px;width:17.5px;text-align:right;letter-spacing:-.7px;font-size:12.5px;color:#111">3</span>
<span class="m" style="left:830px;top:186px"><span style="color:#a4a4a4"># SPDX-License-</span></span>
<span class="m" style="left:830px;top:203px"><span style="color:#a4a4a4">Identifier: GPL-2.0-or-</span></span>
<span class="m" style="left:830px;top:220px"><span style="color:#a4a4a4">later</span></span>
<span class="m" style="left:807px;top:237px;width:17.5px;text-align:right;letter-spacing:-.7px;font-size:12.5px;color:#111">4</span>
<span class="m" style="left:830px;top:237px"></span>
<span class="m" style="left:807px;top:254px;width:17.5px;text-align:right;letter-spacing:-.7px;font-size:12.5px;color:#111">5</span>
<span class="m" style="left:830px;top:254px"></span>
<span class="m" style="left:807px;top:271px;width:17.5px;text-align:right;letter-spacing:-.7px;font-size:12.5px;color:#111">6</span>
<span class="m" style="left:830px;top:271px"><span style="color:#a4a4a4"># turnright and forward</span></span>
<span class="m" style="left:830px;top:288px"><span style="color:#a4a4a4">in one</span></span>
<span class="m" style="left:807px;top:305px;width:17.5px;text-align:right;letter-spacing:-.7px;font-size:12.5px;color:#111">7</span>
<span class="m" style="left:830px;top:305px"><span style="color:#08d808;font-weight:bold">learn</span> trfw <span style="color:#8a008a;font-weight:bold">$tr</span>, <span style="color:#8a008a;font-weight:bold">$fw</span> <span style="color:#1a6e1a;font-weight:bold">{</span></span>
<span class="m" style="left:807px;top:322px;width:17.5px;text-align:right;letter-spacing:-.7px;font-size:12.5px;color:#111">8</span>
<span class="m" style="left:830px;top:322px">  <span style="color:#1a0a8c;font-weight:bold">turnright</span> <span style="color:#8a008a;font-weight:bold">$tr</span></span>
<span class="m" style="left:807px;top:339px;width:17.5px;text-align:right;letter-spacing:-.7px;font-size:12.5px;color:#111">9</span>
<span class="m" style="left:830px;top:339px">  <span style="color:#1a0a8c;font-weight:bold">forward</span> <span style="color:#8a008a;font-weight:bold">$fw</span></span>
<span class="m" style="left:807px;top:356px;width:17.5px;text-align:right;letter-spacing:-.7px;font-size:12.5px;color:#111">10</span>
<span class="m" style="left:830px;top:356px"><span style="color:#1a6e1a;font-weight:bold">}</span></span>
<span class="m" style="left:807px;top:373px;width:17.5px;text-align:right;letter-spacing:-.7px;font-size:12.5px;color:#111">11</span>
<span class="m" style="left:830px;top:373px"></span>
<span class="m" style="left:807px;top:390px;width:17.5px;text-align:right;letter-spacing:-.7px;font-size:12.5px;color:#111">12</span>
<span class="m" style="left:830px;top:390px"><span style="color:#a4a4a4"># initialization</span></span>
<span class="m" style="left:807px;top:407px;width:17.5px;text-align:right;letter-spacing:-.7px;font-size:12.5px;color:#111">13</span>
<span class="m" style="left:830px;top:407px"><span style="color:#1a0a8c;font-weight:bold">reset</span></span>
<span class="m" style="left:807px;top:424px;width:17.5px;text-align:right;letter-spacing:-.7px;font-size:12.5px;color:#111">14</span>
<span class="m" style="left:830px;top:424px"><span style="color:#1a0a8c;font-weight:bold">canvassize</span> <span style="color:#a01818">620</span>, <span style="color:#a01818">480</span></span>
<span class="m" style="left:807px;top:441px;width:17.5px;text-align:right;letter-spacing:-.7px;font-size:12.5px;color:#111">15</span>
<span class="m" style="left:830px;top:441px"><span style="color:#1a0a8c;font-weight:bold">canvascolor</span> <span style="color:#a01818">10</span>, <span style="color:#a01818">50</span>, <span style="color:#a01818">200</span></span>
<span class="m" style="left:807px;top:458px;width:17.5px;text-align:right;letter-spacing:-.7px;font-size:12.5px;color:#111">16</span>
<span class="m" style="left:830px;top:458px"><span style="color:#1a0a8c;font-weight:bold">pencolor</span> <span style="color:#a01818">255</span>, <span style="color:#a01818">255</span>, <span style="color:#a01818">255</span></span>
<span class="m" style="left:807px;top:475px;width:17.5px;text-align:right;letter-spacing:-.7px;font-size:12.5px;color:#111">17</span>
<span class="m" style="left:830px;top:475px"><span style="color:#1a0a8c;font-weight:bold">penwidth</span> <span style="color:#a01818">3</span></span>
<span class="m" style="left:807px;top:492px;width:17.5px;text-align:right;letter-spacing:-.7px;font-size:12.5px;color:#111">18</span>
<span class="m" style="left:830px;top:492px"></span>
<span class="m" style="left:807px;top:509px;width:17.5px;text-align:right;letter-spacing:-.7px;font-size:12.5px;color:#111">19</span>
<span class="m" style="left:830px;top:509px"><span style="color:#a4a4a4"># "K"</span></span>
<span class="m" style="left:807px;top:526px;width:17.5px;text-align:right;letter-spacing:-.7px;font-size:12.5px;color:#111">20</span>
<span class="m" style="left:830px;top:526px"><span style="color:#1a0a8c;font-weight:bold">penup</span></span>
<span class="m" style="left:807px;top:543px;width:17.5px;text-align:right;letter-spacing:-.7px;font-size:12.5px;color:#111">21</span>
<span class="m" style="left:830px;top:543px"><span style="color:#1a0a8c;font-weight:bold">go</span> <span style="color:#a01818">294</span>, <span style="color:#a01818">280</span></span>
<span class="m" style="left:807px;top:560px;width:17.5px;text-align:right;letter-spacing:-.7px;font-size:12.5px;color:#111">22</span>
<span class="m" style="left:830px;top:560px"><span style="color:#1a0a8c;font-weight:bold">pendown</span></span>
</div></div>
<div class="a" style="left:1033px;top:90px;width:4px;height:500px;background:repeating-linear-gradient(#d8d8d8 0 1px,#a8a8a8 1px 2px);opacity:.55"></div>
<div class="a" style="left:1457px;top:90px;width:4px;height:500px;background:repeating-linear-gradient(#d8d8d8 0 1px,#a8a8a8 1px 2px);opacity:.55"></div>
<div class="a" style="left:1039px;top:88px;width:416px;height:300px;background:#fff;border:1px solid #8e8e8e;border-right-color:#c8c8c8"></div>
<div class="a" style="left:1054px;top:182px;width:386px;height:200px;background:#0a30c8;border-top:1px solid #061c80;border-left:1px solid #061c80"></div>
<svg class="a" style="left:1040px;top:88px" width="414" height="288" viewBox="1040 88 414 288"><rect x="1142" y="210" width="219" height="200" rx="9" fill="none" stroke="#fff" stroke-width="3"/><polygon points="1237,225.8 1268,222.8 1267.5,280.6 1311,224.4 1344.7,232 1300.8,287 1343.3,346.7 1309,356.4 1266.7,294.4 1266.7,350.8 1237,355.8" fill="none" stroke="#fff" stroke-width="1.6"/><path d="M1229.4 282.8 L1228.9 265.6 L1223 268.9 L1200.8 252.8 L1184.4 267.5 L1198 292.5 L1192 305.6 L1164.7 310 L1163.3 331.4 L1190.6 339.2 L1196 352.2 L1180 375 L1170 390" fill="none" stroke="#fff" stroke-width="1.6"/><path d="M1229.4 282.8 A48.6 48.6 0 1 0 1295.3 348 L1305.6 364.7 L1312 363.3 L1325 385" fill="none" stroke="#fff" stroke-width="1.6"/></svg>
<span class="t" style="left:1468px;top:90px;color:#000"><u>I</u>nspector</span>
<div class="a" style="left:1642px;top:91px;width:10px;height:10px;border:1px solid #9c9c9c;background:linear-gradient(#e8e8e8,#cfcfcf);border-radius:1px"></div>
<div class="a" style="left:1663px;top:91px;width:10px;height:10px;border:1px solid #9c9c9c;background:linear-gradient(#e8e8e8,#cfcfcf);border-radius:1px"></div>
<svg class="a" style="left:1644px;top:93px;" width="6" height="6" viewBox="0 0 6 6"><rect x=".5" y="1.5" width="4" height="4" fill="none" stroke="#808080"/><path d="M1.5 1.5V.5H5.5V4.5H4.5" fill="none" stroke="#808080"/></svg>
<svg class="a" style="left:1665px;top:93px;" width="6" height="6" viewBox="0 0 6 6"><path d="M.5 .5L5.5 5.5M5.5 .5L.5 5.5" stroke="#707070" stroke-width="1.2"/></svg>
<div class="a" style="left:1531px;top:113px;width:68px;height:19px;background:linear-gradient(#dcdcdc,#cecece);border:1px solid #a4a4a4"></div>
<div class="a" style="left:1598px;top:113px;width:39px;height:19px;background:linear-gradient(#dcdcdc,#cecece);border:1px solid #a4a4a4"></div>
<div class="a" style="left:1465px;top:110px;width:66px;height:23px;background:linear-gradient(#e8e8e8,#dcdcdc);border:1px solid #a4a4a4;border-bottom:none;border-radius:4px 4px 0 0;box-shadow:inset 1px 1px 0 #f8f8f8"></div>
<span class="t" style="left:1471px;top:114px;color:#000">Variables</span>
<span class="t" style="left:1538px;top:115px;color:#000">Functions</span>
<span class="t" style="left:1605px;top:115px;color:#000">Tree</span>
<div class="a" style="left:1466px;top:138px;width:207px;height:300px;background:#efefef;border:1px solid #9c9c9c"></div>
<div class="a" style="left:1467px;top:139px;width:205px;height:19px;background:#d6d6d6"></div>
<div class="a" style="left:1467px;top:139px;width:76px;height:19px;background:linear-gradient(#e6e6e6,#d8d8d8);border:1px solid #a8a8a8;border-top-color:#f4f4f4;border-left-color:#f4f4f4"><span class="t" style="left:1px;top:1px;color:#6c6c6c">name</span></div>
<div class="a" style="left:1543px;top:139px;width:36px;height:19px;background:linear-gradient(#e6e6e6,#d8d8d8);border:1px solid #a8a8a8;border-top-color:#f4f4f4;border-left-color:#f4f4f4"><span class="t" style="left:1px;top:1px;color:#6c6c6c">value</span></div>
<div class="a" style="left:1579px;top:139px;width:36px;height:19px;background:linear-gradient(#e6e6e6,#d8d8d8);border:1px solid #a8a8a8;border-top-color:#f4f4f4;border-left-color:#f4f4f4"><span class="t" style="left:1px;top:1px;color:#6c6c6c">type</span></div>
<span class="t" style="left:1471px;top:162px;color:#c6c6c6">No variables</span>
<div class="a" style="left:1763px;top:0px;width:157px;height:298px;background:#d0d0d0;border-left:1px solid #8c8c8c;border-bottom:1px solid #8c8c8c"></div>
<div class="a" style="left:1764px;top:0px;width:156px;height:25px;background:linear-gradient(#f0f0f0,#d6d6d6);border-bottom:1px solid #9a9a9a"></div>
<svg class="a" style="left:1805px;top:0" width="72" height="26" viewBox="1805 0 72 26"><defs><linearGradient id="lf" x1="0" y1="0" x2="0" y2="1"><stop offset="0" stop-color="#0046a4"/><stop offset=".55" stop-color="#0068cc"/><stop offset="1" stop-color="#00a0ff"/></linearGradient></defs><path d="M1810.8 15.4Q1818 19.4 1826.7 19.3L1832.5 25.5L1854 25.5L1858.3 20.8L1856.5 20.5L1867 11.5L1865.6 10.6L1871.7 5.8Q1862 4.8 1855.8 6.8L1854.3 11L1853.4 7.5Q1845 10 1838.5 14.5L1837.6 16.6L1836.8 15.2Q1832 17.4 1826.7 17.9Q1818 17.4 1810.8 15.4Z" fill="url(#lf)"/></svg>
<div class="a" style="left:1764px;top:26px;width:156px;height:41px;background:#cdcdcd;border-bottom:1px solid #a0a0a0"></div>
<div class="a" style="left:1765px;top:28px;width:1px;height:37px;background:repeating-linear-gradient(#cdcdcd 0 1px,#8c8c8c 1px 2px)"></div>
<div class="a" style="left:1916px;top:28px;width:1px;height:37px;background:repeating-linear-gradient(#cdcdcd 0 1px,#8c8c8c 1px 2px)"></div>
<div class="a" style="left:1771px;top:29px;width:35px;height:16px;background:#2b2a4a;border:1px solid #111"></div>
<div class="a" style="left:1807px;top:29px;width:3px;height:16px;background:linear-gradient(#6a4aa0,#c8a0e0);border:1px solid #222"></div>
<div class="a" style="left:1815px;top:33px;width:13px;height:8px;background:linear-gradient(135deg,#d8f0a0,#4ab828);border:1px solid #5a7a3a"></div>
<span class="t" style="left:1842px;top:30px;color:#000">Fri 10:53 AM</span>
<svg class="a" style="left:1771px;top:47px;" width="17" height="17" viewBox="0 0 17 17"><rect x="2" y="2" width="12" height="13" rx="2" fill="#c8c8c8" stroke="#444" stroke-width="1"/><circle cx="8" cy="9" r="3.6" fill="#555" stroke="#222"/><circle cx="8" cy="9" r="1.3" fill="#ddd"/></svg>
<svg class="a" style="left:1789px;top:47px;" width="17" height="17" viewBox="0 0 17 17"><circle cx="6" cy="4.5" r="3.8" fill="#2a8ad0" stroke="#14406a" stroke-width=".8"/><circle cx="4" cy="13" r="2.6" fill="#2ac42a" stroke="#0a5a0a" stroke-width=".8"/><rect x="10" y="6" width="5.5" height="9" fill="#d8d8d8" stroke="#444" stroke-width=".9"/><path d="M6 8L5 11M8 6L11 8" stroke="#333" stroke-width=".9"/></svg>
<div class="a" style="left:1764px;top:67px;width:156px;height:21px;background:linear-gradient(#ececec,#d2d2d2);border-top:1px solid #f8f8f8;border-bottom:1px solid #a4a4a4"></div>
<svg class="a" style="left:1772px;top:69px;" width="16" height="16" viewBox="0 0 16 16"><path d="M3 6L6 2L11 3L14 7L13 14L4 14L2 10Z" fill="#b5793a" stroke="#5e3a14" stroke-width="1"/><rect x="5" y="9" width="5" height="6" fill="#f4f4f4" stroke="#888" stroke-width=".6"/><circle cx="6" cy="5" r="1" fill="#222"/></svg>
<span class="t" style="left:1795px;top:70px;color:#000">Tracker</span>
<svg class="a" style="left:1911px;top:74px;" width="5" height="7" viewBox="0 0 5 7"><path d="M.5 .5L4.5 3.5L.5 6.5Z" fill="#6a6a6a"/></svg>
<div class="a" style="left:1764px;top:88px;width:156px;height:21px;background:linear-gradient(#ececec,#d2d2d2);border-top:1px solid #f8f8f8;border-bottom:1px solid #a4a4a4"></div>
<svg class="a" style="left:1772px;top:90px;" width="16" height="16" viewBox="0 0 16 16"><rect x="1" y="1.5" width="14" height="10" rx="2" fill="#3a9fe0" stroke="#1b5c94" stroke-width="1"/><path d="M4 11L4 15L8 11Z" fill="#3a9fe0" stroke="#1b5c94" stroke-width="1"/><path d="M3.5 5H12.5M3.5 8H10" stroke="#cfe9fb" stroke-width="1.3"/></svg>
<span class="t" style="left:1795px;top:91px;color:#000">NeoChat</span>
<svg class="a" style="left:1911px;top:95px;" width="5" height="7" viewBox="0 0 5 7"><path d="M.5 .5L4.5 3.5L.5 6.5Z" fill="#6a6a6a"/></svg>
<div class="a" style="left:1764px;top:109px;width:156px;height:21px;background:linear-gradient(#ececec,#d2d2d2);border-top:1px solid #f8f8f8;border-bottom:1px solid #a4a4a4"></div>
<svg class="a" style="left:1772px;top:111px;" width="16" height="16" viewBox="0 0 16 16"><ellipse cx="8" cy="10" rx="7.3" ry="4.6" fill="#f0a81e" stroke="#1a3a9a" stroke-width="1.6"/><circle cx="8" cy="6.5" r="5" fill="#2a9a3a" stroke="#14502a" stroke-width=".8"/><path d="M5 4L8 6L6 9Z" fill="#e03030"/><path d="M9 3L12 5L10 7Z" fill="#f4d020"/></svg>
<span class="t" style="left:1795px;top:112px;color:#000">WebPositive</span>
<svg class="a" style="left:1911px;top:116px;" width="5" height="7" viewBox="0 0 5 7"><path d="M.5 .5L4.5 3.5L.5 6.5Z" fill="#6a6a6a"/></svg>
<div class="a" style="left:1764px;top:130px;width:156px;height:21px;background:linear-gradient(#ececec,#d2d2d2);border-top:1px solid #f8f8f8;border-bottom:1px solid #a4a4a4"></div>
<svg class="a" style="left:1772px;top:132px;" width="16" height="16" viewBox="0 0 16 16"><path d="M5 2L10 2L11 10L4 10Z" fill="#f4f4f4" stroke="#666" stroke-width=".9"/><path d="M1 12L4 10L11 10L15 12L13 15L3 15Z" fill="#d8d8d8" stroke="#555" stroke-width=".9"/><rect x="5" y="1" width="2" height="3" fill="#e8c020"/></svg>
<span class="t" style="left:1795px;top:133px;color:#000">Terminal</span>
<svg class="a" style="left:1911px;top:137px;" width="5" height="7" viewBox="0 0 5 7"><path d="M.5 .5L4.5 3.5L.5 6.5Z" fill="#6a6a6a"/></svg>
<div class="a" style="left:1764px;top:151px;width:156px;height:21px;background:linear-gradient(#ececec,#d2d2d2);border-top:1px solid #f8f8f8;border-bottom:1px solid #a4a4a4"></div>
<svg class="a" style="left:1772px;top:153px;" width="16" height="16" viewBox="0 0 16 16"><circle cx="8" cy="8" r="7.3" fill="#2a8fd8" stroke="#1a5a9a" stroke-width=".8"/><path d="M8 8A2 2 0 1 1 10 6A4 4 0 1 1 5 10" fill="none" stroke="#dff0ff" stroke-width="1.6"/></svg>
<span class="t" style="left:1795px;top:154px;color:#000">ecode</span>
<svg class="a" style="left:1911px;top:158px;" width="5" height="7" viewBox="0 0 5 7"><path d="M.5 .5L4.5 3.5L.5 6.5Z" fill="#6a6a6a"/></svg>
<div class="a" style="left:1764px;top:172px;width:156px;height:21px;background:linear-gradient(#ececec,#d2d2d2);border-top:1px solid #f8f8f8;border-bottom:1px solid #a4a4a4"></div>
<svg class="a" style="left:1772px;top:174px;" width="16" height="16" viewBox="0 0 16 16"><path d="M1 10L8 4L15 8L8 14Z" fill="#eef2ff" stroke="#445" stroke-width=".9"/><path d="M6 11L13 2L15 3.5L8 12.5L5.5 13Z" fill="#6a9ae8" stroke="#234" stroke-width=".8"/></svg>
<span class="t" style="left:1795px;top:175px;color:#000">Pe</span>
<svg class="a" style="left:1911px;top:179px;" width="5" height="7" viewBox="0 0 5 7"><path d="M.5 .5L4.5 3.5L.5 6.5Z" fill="#6a6a6a"/></svg>
<div class="a" style="left:1764px;top:193px;width:156px;height:21px;background:linear-gradient(#ececec,#d2d2d2);border-top:1px solid #f8f8f8;border-bottom:1px solid #a4a4a4"></div>
<svg class="a" style="left:1772px;top:195px;" width="16" height="16" viewBox="0 0 16 16"><ellipse cx="8" cy="11" rx="7" ry="4" fill="#f0a81e" stroke="#7a4a08" stroke-width="1"/><circle cx="8" cy="6" r="4.3" fill="#c8d8c0" stroke="#555" stroke-width=".8"/><path d="M4 3L7 1L9 4Z" fill="#2a9a3a"/><path d="M3 9L13 7" stroke="#d02020" stroke-width="1.4"/></svg>
<span class="t" style="left:1795px;top:196px;color:#000">Web</span>
<svg class="a" style="left:1911px;top:200px;" width="5" height="7" viewBox="0 0 5 7"><path d="M.5 .5L4.5 3.5L.5 6.5Z" fill="#6a6a6a"/></svg>
<div class="a" style="left:1764px;top:214px;width:156px;height:21px;background:linear-gradient(#ececec,#d2d2d2);border-top:1px solid #f8f8f8;border-bottom:1px solid #a4a4a4"></div>
<svg class="a" style="left:1772px;top:216px;" width="16" height="16" viewBox="0 0 16 16"><ellipse cx="8" cy="9" rx="5" ry="5.5" fill="#1f8a1f" stroke="#0c4a0c" stroke-width="1"/><circle cx="8" cy="2.8" r="2.2" fill="#2aa02a" stroke="#0c4a0c" stroke-width=".8"/><path d="M2 6L4 8M14 6L12 8M2 15L4.5 12.5M14 15L11.5 12.5" stroke="#0c4a0c" stroke-width="2"/></svg>
<span class="t" style="left:1795px;top:217px;color:#000">KTurtle</span>
<svg class="a" style="left:1911px;top:221px;" width="5" height="7" viewBox="0 0 5 7"><path d="M.5 .5L4.5 3.5L.5 6.5Z" fill="#6a6a6a"/></svg>
<div class="a" style="left:1764px;top:235px;width:156px;height:21px;background:linear-gradient(#ececec,#d2d2d2);border-top:1px solid #f8f8f8;border-bottom:1px solid #a4a4a4"></div>
<svg class="a" style="left:1772px;top:237px;" width="16" height="16" viewBox="0 0 16 16"><path d="M2.5 1.5V15" stroke="#555" stroke-width="1.2"/><rect x="3" y="2" width="8" height="6" fill="#fff" stroke="#666" stroke-width=".8"/><rect x="6" y="5" width="9" height="8" fill="#f0f0f0" stroke="#666" stroke-width=".8"/><path d="M5 4H7M9 8H12" stroke="#222" stroke-width="1.4"/></svg>
<span class="t" style="left:1795px;top:238px;color:#000">Lokalize</span>
<svg class="a" style="left:1911px;top:242px;" width="5" height="7" viewBox="0 0 5 7"><path d="M.5 .5L4.5 3.5L.5 6.5Z" fill="#6a6a6a"/></svg>
<div class="a" style="left:1764px;top:256px;width:156px;height:21px;background:linear-gradient(#ececec,#d2d2d2);border-top:1px solid #f8f8f8;border-bottom:1px solid #a4a4a4"></div>
<svg class="a" style="left:1772px;top:258px;" width="16" height="16" viewBox="0 0 16 16"><rect x="1" y="1.5" width="14" height="13" rx="1.5" fill="#c0392b" stroke="#5a1a14" stroke-width=".8"/><path d="M1.5 12L6 7L9 10L11 8L14.5 12V14H1.5Z" fill="#232f3e"/><circle cx="8" cy="8.5" r="1.8" fill="#f5a623"/><rect x="1" y="13" width="14" height="2" fill="#3a4a5a"/></svg>
<span class="t" style="left:1795px;top:259px;color:#000">Koko</span>
<svg class="a" style="left:1911px;top:263px;" width="5" height="7" viewBox="0 0 5 7"><path d="M.5 .5L4.5 3.5L.5 6.5Z" fill="#6a6a6a"/></svg>
<div class="a" style="left:1764px;top:277px;width:156px;height:21px;background:linear-gradient(#ececec,#d2d2d2);border-top:1px solid #f8f8f8;border-bottom:1px solid #a4a4a4"></div>
<svg class="a" style="left:1772px;top:279px;" width="16" height="16" viewBox="0 0 16 16"><rect x="1.5" y="2.5" width="13" height="12.5" fill="#f4f4f4" stroke="#c8c8c8" stroke-width=".8"/><rect x="1.5" y="2" width="13" height="3.5" fill="#e05a5a"/><path d="M4 7.5V14M6.7 7.5V14M9.4 7.5V14M12 7.5V14M2.5 8.5H13.5M2.5 10.7H13.5M2.5 12.9H13.5" stroke="#c4c4c4" stroke-width=".8"/></svg>
<span class="t" style="left:1795px;top:280px;color:#000">calindori</span>
<svg class="a" style="left:1911px;top:284px;" width="5" height="7" viewBox="0 0 5 7"><path d="M.5 .5L4.5 3.5L.5 6.5Z" fill="#6a6a6a"/></svg>
<div class="a" style="left:1684px;top:210px;width:9px;height:15px;background:#5cc85a;border-radius:0 9px 9px 0"></div>
<div class="a" style="left:0px;top:569px;width:191px;height:24px;background:linear-gradient(#f4f4f4,#e6e6e6);border:1px solid #9c9c9c;border-bottom:none;box-shadow:inset 1px 1px 0 rgba(255,255,255,.7)"></div>
<div class="a" style="left:5px;top:574px;width:16px;height:16px;background:linear-gradient(135deg,#ffffff,#e4e4e4);border:1px solid #8e8e8e"></div>
<div class="a" style="left:169px;top:574px;width:9px;height:9px;background:linear-gradient(135deg,#ffffff,#e4e4e4);border:1px solid #8e8e8e"></div>
<div class="a" style="left:173px;top:578px;width:12px;height:12px;background:linear-gradient(135deg,#ffffff,#e4e4e4);border:1px solid #8e8e8e"></div>
<span class="t" style="left:39px;top:575px;color:#505050">calindori - Calindori</span>
<div class="a" style="left:0px;top:593px;width:981px;height:487px;background:#e8e8e8;border:1px solid #989898;box-shadow:inset 2px 2px 0 #fcfcfc, inset -1px -1px 0 #d0d0d0"></div>
<div class="a" style="left:4px;top:597px;width:973px;height:479px;border:1px solid #a0a0a0;background:transparent"></div>
<div class="a" style="left:5px;top:598px;width:972px;height:477px;background:#eff0f1"></div>
<div class="a" style="left:5px;top:598px;width:972px;height:39px;background:#e0e1e2"></div>
<div class="a" style="left:5px;top:637px;width:972px;height:1px;background:#c2c3c4"></div>
<span class="t" style="left:21px;top:608px;font-size:17.5px;letter-spacing:-.3px;line-height:20px">Calendar</span>
<div class="a" style="left:205px;top:606px;width:1px;height:25px;background:#c2c3c4"></div>
<div class="a" style="left:205px;top:638px;width:1px;height:437px;background:#c9cacb"></div>
<svg class="a" style="left:216px;top:608px;" width="19" height="21" viewBox="0 0 19 21"><rect x="1" y="3.5" width="16.5" height="16" fill="#fcfcfc" stroke="#9a9a9a"/><rect x="1" y="1" width="6" height="3" fill="#f5b52e"/><rect x="7" y="7" width="9.5" height="11" fill="#e4e4e4" stroke="#8a8a8a" stroke-width=".8"/><path d="M14 8.5 L9.5 12.5 L14 16.5" fill="none" stroke="#1fa335" stroke-width="2.4"/></svg>
<span class="t" style="left:244px;top:608px;font-size:17.5px;letter-spacing:-.3px;line-height:20px">9/12/25</span>
<span class="t" style="left:370px;top:611px;color:#8a8c8e">12</span>
<span class="t" style="left:392px;top:600px;">Friday</span>
<span class="t" style="left:392px;top:621px;">September 2025</span>
<svg class="a" style="left:580px;top:609px;" width="10" height="19" viewBox="0 0 10 19"><path d="M9 .8 L1 9.5 L9 18.2" fill="none" stroke="#232629" stroke-width="1.2"/></svg>
<span class="t" style="left:599px;top:611px;">Previous</span>
<svg class="a" style="left:674px;top:609px;" width="10" height="19" viewBox="0 0 10 19"><path d="M1 .8 L9 9.5 L1 18.2" fill="none" stroke="#232629" stroke-width="1.2"/></svg>
<span class="t" style="left:693px;top:611px;">Next</span>
<svg class="a" style="left:744px;top:610px;" width="17" height="17" viewBox="0 0 17 17"><rect x=".6" y="2.6" width="15.8" height="13.8" fill="#fcfcfc" stroke="#232629" stroke-width="1.2"/>
<rect x=".6" y="2" width="15.8" height="2.6" fill="#232629"/><rect x="3" y=".3" width="3.4" height="2.6" fill="#fcfcfc" stroke="#232629" stroke-width="1"/><rect x="10.6" y=".3" width="3.4" height="2.6" fill="#fcfcfc" stroke="#232629" stroke-width="1"/>
<g fill="#232629"><rect x="3" y="6.5" width="2" height="2"/><rect x="6.2" y="6.5" width="2" height="2"/><rect x="9.4" y="6.5" width="2" height="2"/><rect x="3" y="9.7" width="2" height="2"/><rect x="6.2" y="9.7" width="2" height="2"/><rect x="9.4" y="9.7" width="2" height="2"/></g><rect x="12.4" y="6.5" width="2" height="2" fill="#232629"/><rect x="12.4" y="12.6" width="2" height="2" fill="#232629"/></svg>
<span class="t" style="left:766px;top:611px;">Today</span>
<svg class="a" style="left:824px;top:610px;" width="17" height="17" viewBox="0 0 17 17"><rect x="2.6" y=".6" width="13.8" height="15.8" fill="#fcfcfc" stroke="#232629" stroke-width="1.2"/>
<path d="M.5 3H3.5M.5 6H3.5M.5 9H3.5M.5 12H3.5M.5 14.5H3.5" stroke="#232629" stroke-width="1.2"/>
<path d="M5.5 4.5H7M8.2 4.5H14M5.5 8.5H7M8.2 8.5H14M5.5 12.5H7M8.2 12.5H14" stroke="#232629" stroke-width="1.4"/></svg>
<span class="t" style="left:846px;top:611px;">Tasks</span>
<svg class="a" style="left:901px;top:610px;" width="17" height="17" viewBox="0 0 17 17"><rect x=".6" y="2.6" width="15.8" height="13.8" fill="#fcfcfc" stroke="#232629" stroke-width="1.2"/>
<rect x=".6" y="2" width="15.8" height="2.6" fill="#232629"/><rect x="3" y=".3" width="3.4" height="2.6" fill="#fcfcfc" stroke="#232629" stroke-width="1"/><rect x="10.6" y=".3" width="3.4" height="2.6" fill="#fcfcfc" stroke="#232629" stroke-width="1"/>
<g fill="#232629"><rect x="3" y="6.5" width="2" height="2"/><rect x="6.2" y="6.5" width="2" height="2"/><rect x="9.4" y="6.5" width="2" height="2"/><rect x="3" y="9.7" width="2" height="2"/><rect x="6.2" y="9.7" width="2" height="2"/><rect x="9.4" y="9.7" width="2" height="2"/></g><rect x="12.4" y="6.5" width="2" height="2" fill="#232629"/><rect x="12.4" y="12.6" width="2" height="2" fill="#232629"/></svg>
<span class="t" style="left:923px;top:611px;">Events</span>
<div class="a" style="left:9px;top:642px;width:193px;height:36px;background:#e2eaf2;border:1px solid #c5dff0;border-radius:4px"></div>
<svg class="a" style="left:29px;top:652px;" width="17" height="17" viewBox="0 0 17 17"><rect x=".6" y="2.6" width="15.8" height="13.8" fill="#fcfcfc" stroke="#232629" stroke-width="1.2"/>
<rect x=".6" y="2" width="15.8" height="2.6" fill="#232629"/><rect x="3" y=".3" width="3.4" height="2.6" fill="#fcfcfc" stroke="#232629" stroke-width="1"/><rect x="10.6" y=".3" width="3.4" height="2.6" fill="#fcfcfc" stroke="#232629" stroke-width="1"/>
<g fill="#27ae60"><rect x="3" y="6.5" width="2" height="2"/><rect x="6.2" y="6.5" width="2" height="2"/><rect x="9.4" y="6.5" width="2" height="2"/><rect x="3" y="9.7" width="2" height="2"/><rect x="6.2" y="9.7" width="2" height="2"/><rect x="9.4" y="9.7" width="2" height="2"/></g><rect x="12.4" y="6.5" width="2" height="2" fill="#232629"/><rect x="12.4" y="12.6" width="2" height="2" fill="#232629"/></svg>
<span class="t" style="left:67px;top:653px;">Month View</span>
<svg class="a" style="left:29px;top:692px;" width="17" height="17" viewBox="0 0 17 17"><rect x=".6" y="2.6" width="15.8" height="13.8" fill="#fcfcfc" stroke="#232629" stroke-width="1.2"/>
<rect x=".6" y="2" width="15.8" height="2.6" fill="#232629"/><rect x="3" y=".3" width="3.4" height="2.6" fill="#fcfcfc" stroke="#232629" stroke-width="1"/><rect x="10.6" y=".3" width="3.4" height="2.6" fill="#fcfcfc" stroke="#232629" stroke-width="1"/>
<g fill="#27ae60"><rect x="3" y="6.5" width="2" height="2"/><rect x="6.2" y="6.5" width="2" height="2"/><rect x="9.4" y="6.5" width="2" height="2"/><rect x="3" y="9.7" width="2" height="2"/><rect x="6.2" y="9.7" width="2" height="2"/><rect x="9.4" y="9.7" width="2" height="2"/></g><rect x="12.4" y="6.5" width="2" height="2" fill="#232629"/><rect x="12.4" y="12.6" width="2" height="2" fill="#232629"/></svg>
<span class="t" style="left:67px;top:693px;">Week View</span>
<svg class="a" style="left:27px;top:729px;" width="22" height="21" viewBox="0 0 22 21"><path d="M3 3 L15 1 L20 16 L8 19Z" fill="#c9d6e6" stroke="#5d6f86" stroke-width="1"/>
<path d="M2 6 L13.5 3.5 L17.5 17 L6.5 19.5Z" fill="#f1d9a8" stroke="#6b7b8f" stroke-width="1"/><path d="M2.2 6 L13.5 3.6 L14.3 6.3 L3 8.8Z" fill="#5b8bd6"/><path d="M3.5 10 L7 9.2 L8 13 L4.6 13.8Z" fill="#e06c5a"/>
<path d="M17.5 17 L20 16 L21 19.5Z" fill="#7d8ea6"/></svg>
<span class="t" style="left:67px;top:733px;">Day View</span>
<svg class="a" style="left:29px;top:772px;" width="17" height="17" viewBox="0 0 17 17"><rect x="2.6" y=".6" width="13.8" height="15.8" fill="#fcfcfc" stroke="#232629" stroke-width="1.2"/>
<path d="M.5 3H3.5M.5 6H3.5M.5 9H3.5M.5 12H3.5M.5 14.5H3.5" stroke="#232629" stroke-width="1.2"/>
<path d="M5.5 4.5H7M8.2 4.5H14M5.5 8.5H7M8.2 8.5H14M5.5 12.5H7M8.2 12.5H14" stroke="#232629" stroke-width="1.4"/></svg>
<span class="t" style="left:67px;top:773px;">Tasks List</span>
<svg class="a" style="left:29px;top:812px;" width="17" height="17" viewBox="0 0 17 17"><rect x="2.6" y=".6" width="13.8" height="15.8" fill="#fcfcfc" stroke="#232629" stroke-width="1.2"/>
<path d="M.5 3H3.5M.5 6H3.5M.5 9H3.5M.5 12H3.5M.5 14.5H3.5" stroke="#232629" stroke-width="1.2"/>
<path d="M3 4.2H16M3 7.3H16M3 10.4H16M3 13.5H16M6.5 1V16" stroke="#232629" stroke-width="1.2"/></svg>
<span class="t" style="left:67px;top:813px;">Events List</span>
<div class="a" style="left:13px;top:843px;width:184px;height:1px;background:#cbcccd"></div>
<span class="t" style="left:17px;top:852px;font-size:15px;line-height:18px;color:#6b6e70">Calendars</span>
<svg class="a" style="left:28px;top:883px;" width="20" height="18" viewBox="0 0 20 18"><path d="M2 9 L7.5 15.5 L18.5 4 L15.5 1.5 L7.5 9.5 L4.5 6.5Z" fill="#35c433" stroke="#137a18" stroke-width="1.2" stroke-linejoin="round"/></svg>
<span class="t" style="left:67px;top:885px;">personal</span>
<div class="a" style="left:13px;top:1030px;width:184px;height:1px;background:#cbcccd"></div>
<svg class="a" style="left:28px;top:1043px;" width="20" height="20" viewBox="0 0 20 20"><circle cx="10" cy="10" r="6.3" fill="none" stroke="#4a4d50" stroke-width="1.2"/><circle cx="10" cy="10" r="2.3" fill="none" stroke="#4a4d50" stroke-width="1.2"/><g stroke="#4a4d50" stroke-width="2.6"><path d="M10 1.5V4M10 16V18.5M1.5 10H4M16 10H18.5M4 4L5.8 5.8M14.2 14.2L16 16M4 16L5.8 14.2M14.2 5.8L16 4"/></g><circle cx="10" cy="10" r="5.2" fill="#eff0f1"/><circle cx="10" cy="10" r="2.3" fill="none" stroke="#4a4d50" stroke-width="1.2"/></svg>
<span class="t" style="left:67px;top:1046px;">Settings</span>
<div class="a" style="left:370px;top:670px;width:441px;height:63px;background:#8a95a2"></div>
<span class="t" style="left:370px;top:694px;width:63px;text-align:center;color:#dfe3e8">Sun</span>
<span class="t" style="left:433px;top:694px;width:63px;text-align:center;color:#dfe3e8">Mon</span>
<span class="t" style="left:496px;top:694px;width:63px;text-align:center;color:#dfe3e8">Tue</span>
<span class="t" style="left:559px;top:694px;width:63px;text-align:center;color:#dfe3e8">Wed</span>
<span class="t" style="left:622px;top:694px;width:63px;text-align:center;color:#dfe3e8">Thu</span>
<span class="t" style="left:685px;top:694px;width:63px;text-align:center;color:#dfe3e8">Fri</span>
<span class="t" style="left:748px;top:694px;width:63px;text-align:center;color:#dfe3e8">Sat</span>
<div class="a w" style="left:0;top:0;width:977px;height:1075px">
<div class="a" style="left:370px;top:737px;width:63px;height:63px;border:1px solid #6b7a89;"><span class="t" style="left:0;top:23px;width:61px;text-align:center;color:#8b8d8f">31</span></div>
<div class="a" style="left:433px;top:737px;width:63px;height:63px;border:1px solid #6b7a89;"><span class="t" style="left:0;top:23px;width:61px;text-align:center;color:#232629">1</span></div>
<div class="a" style="left:496px;top:737px;width:63px;height:63px;border:1px solid #6b7a89;"><span class="t" style="left:0;top:23px;width:61px;text-align:center;color:#232629">2</span></div>
<div class="a" style="left:559px;top:737px;width:63px;height:63px;border:1px solid #6b7a89;"><span class="t" style="left:0;top:23px;width:61px;text-align:center;color:#232629">3</span></div>
<div class="a" style="left:622px;top:737px;width:63px;height:63px;border:1px solid #6b7a89;"><span class="t" style="left:0;top:23px;width:61px;text-align:center;color:#232629">4</span></div>
<div class="a" style="left:685px;top:737px;width:63px;height:63px;border:1px solid #6b7a89;"><span class="t" style="left:0;top:23px;width:61px;text-align:center;color:#232629">5</span></div>
<div class="a" style="left:748px;top:737px;width:63px;height:63px;border:1px solid #6b7a89;"><span class="t" style="left:0;top:23px;width:61px;text-align:center;color:#232629">6</span></div>
<div class="a" style="left:370px;top:800px;width:63px;height:63px;border:1px solid #6b7a89;"><span class="t" style="left:0;top:23px;width:61px;text-align:center;color:#232629">7</span></div>
<div class="a" style="left:433px;top:800px;width:63px;height:63px;border:1px solid #6b7a89;"><span class="t" style="left:0;top:23px;width:61px;text-align:center;color:#232629">8</span></div>
<div class="a" style="left:496px;top:800px;width:63px;height:63px;border:1px solid #6b7a89;"><span class="t" style="left:0;top:23px;width:61px;text-align:center;color:#232629">9</span></div>
<div class="a" style="left:559px;top:800px;width:63px;height:63px;border:1px solid #6b7a89;"><span class="t" style="left:0;top:23px;width:61px;text-align:center;color:#232629">10</span></div>
<div class="a" style="left:622px;top:800px;width:63px;height:63px;border:1px solid #6b7a89;"><span class="t" style="left:0;top:23px;width:61px;text-align:center;color:#232629">11</span></div>
<div class="a" style="left:685px;top:800px;width:63px;height:63px;border:1px solid #6b7a89;background:#a6a7a8;"><span class="t" style="left:0;top:23px;width:61px;text-align:center;color:#8b8d8f">12</span></div>
<div class="a" style="left:748px;top:800px;width:63px;height:63px;border:1px solid #6b7a89;"><span class="t" style="left:0;top:23px;width:61px;text-align:center;color:#232629">13</span></div>
<div class="a" style="left:370px;top:863px;width:63px;height:63px;border:1px solid #6b7a89;"><span class="t" style="left:0;top:23px;width:61px;text-align:center;color:#232629">14</span></div>
<div class="a" style="left:433px;top:863px;width:63px;height:63px;border:1px solid #6b7a89;"><span class="t" style="left:0;top:23px;width:61px;text-align:center;color:#232629">15</span></div>
<div class="a" style="left:496px;top:863px;width:63px;height:63px;border:1px solid #6b7a89;"><span class="t" style="left:0;top:23px;width:61px;text-align:center;color:#232629">16</span></div>
<div class="a" style="left:559px;top:863px;width:63px;height:63px;border:1px solid #6b7a89;"><span class="t" style="left:0;top:23px;width:61px;text-align:center;color:#232629">17</span></div>
<div class="a" style="left:622px;top:863px;width:63px;height:63px;border:1px solid #6b7a89;"><span class="t" style="left:0;top:23px;width:61px;text-align:center;color:#232629">18</span></div>
<div class="a" style="left:685px;top:863px;width:63px;height:63px;border:1px solid #6b7a89;"><span class="t" style="left:0;top:23px;width:61px;text-align:center;color:#232629">19</span></div>
<div class="a" style="left:748px;top:863px;width:63px;height:63px;border:1px solid #6b7a89;"><span class="t" style="left:0;top:23px;width:61px;text-align:center;color:#232629">20</span></div>
<div class="a" style="left:370px;top:926px;width:63px;height:63px;border:1px solid #6b7a89;"><span class="t" style="left:0;top:23px;width:61px;text-align:center;color:#232629">21</span></div>
<div class="a" style="left:433px;top:926px;width:63px;height:63px;border:1px solid #6b7a89;"><span class="t" style="left:0;top:23px;width:61px;text-align:center;color:#232629">22</span></div>
<div class="a" style="left:496px;top:926px;width:63px;height:63px;border:1px solid #6b7a89;"><span class="t" style="left:0;top:23px;width:61px;text-align:center;color:#232629">23</span></div>
<div class="a" style="left:559px;top:926px;width:63px;height:63px;border:1px solid #6b7a89;"><span class="t" style="left:0;top:23px;width:61px;text-align:center;color:#232629">24</span></div>
<div class="a" style="left:622px;top:926px;width:63px;height:63px;border:1px solid #6b7a89;"><span class="t" style="left:0;top:23px;width:61px;text-align:center;color:#232629">25</span></div>
<div class="a" style="left:685px;top:926px;width:63px;height:63px;border:1px solid #6b7a89;"><span class="t" style="left:0;top:23px;width:61px;text-align:center;color:#232629">26</span></div>
<div class="a" style="left:748px;top:926px;width:63px;height:63px;border:1px solid #6b7a89;"><span class="t" style="left:0;top:23px;width:61px;text-align:center;color:#232629">27</span></div>
<div class="a" style="left:370px;top:989px;width:63px;height:63px;border:1px solid #6b7a89;"><span class="t" style="left:0;top:23px;width:61px;text-align:center;color:#232629">28</span></div>
<div class="a" style="left:433px;top:989px;width:63px;height:63px;border:1px solid #6b7a89;"><span class="t" style="left:0;top:23px;width:61px;text-align:center;color:#232629">29</span></div>
<div class="a" style="left:496px;top:989px;width:63px;height:63px;border:1px solid #6b7a89;"><span class="t" style="left:0;top:23px;width:61px;text-align:center;color:#232629">30</span></div>
<div class="a" style="left:559px;top:989px;width:63px;height:63px;border:1px solid #6b7a89;"><span class="t" style="left:0;top:23px;width:61px;text-align:center;color:#8b8d8f">1</span></div>
<div class="a" style="left:622px;top:989px;width:63px;height:63px;border:1px solid #6b7a89;"><span class="t" style="left:0;top:23px;width:61px;text-align:center;color:#8b8d8f">2</span></div>
<div class="a" style="left:685px;top:989px;width:63px;height:63px;border:1px solid #6b7a89;"><span class="t" style="left:0;top:23px;width:61px;text-align:center;color:#8b8d8f">3</span></div>
<div class="a" style="left:748px;top:989px;width:63px;height:63px;border:1px solid #6b7a89;"><span class="t" style="left:0;top:23px;width:61px;text-align:center;color:#8b8d8f">4</span></div>
<div class="a" style="left:370px;top:1052px;width:63px;height:63px;border:1px solid #6b7a89;"><span class="t" style="left:0;top:23px;width:61px;text-align:center;color:#8b8d8f"></span></div>
<div class="a" style="left:433px;top:1052px;width:63px;height:63px;border:1px solid #6b7a89;"><span class="t" style="left:0;top:23px;width:61px;text-align:center;color:#8b8d8f"></span></div>
<div class="a" style="left:496px;top:1052px;width:63px;height:63px;border:1px solid #6b7a89;"><span class="t" style="left:0;top:23px;width:61px;text-align:center;color:#8b8d8f"></span></div>
<div class="a" style="left:559px;top:1052px;width:63px;height:63px;border:1px solid #6b7a89;"><span class="t" style="left:0;top:23px;width:61px;text-align:center;color:#8b8d8f"></span></div>
<div class="a" style="left:622px;top:1052px;width:63px;height:63px;border:1px solid #6b7a89;"><span class="t" style="left:0;top:23px;width:61px;text-align:center;color:#8b8d8f"></span></div>
<div class="a" style="left:685px;top:1052px;width:63px;height:63px;border:1px solid #6b7a89;"><span class="t" style="left:0;top:23px;width:61px;text-align:center;color:#8b8d8f"></span></div>
<div class="a" style="left:748px;top:1052px;width:63px;height:63px;border:1px solid #6b7a89;"><span class="t" style="left:0;top:23px;width:61px;text-align:center;color:#8b8d8f"></span></div>
</div>
<div class="a" style="left:1007px;top:352px;width:156px;height:24px;background:linear-gradient(#ffe14d,#ffcb00 40%,#f5be00);border:1px solid #b89a1c;border-bottom:none;box-shadow:inset 1px 1px 0 rgba(255,255,255,.7)"></div>
<div class="a" style="left:1012px;top:357px;width:16px;height:16px;background:linear-gradient(135deg,#fff2a8,#ffd83a);border:1px solid #a58a10"></div>
<div class="a" style="left:1141px;top:357px;width:9px;height:9px;background:linear-gradient(135deg,#fff2a8,#ffd83a);border:1px solid #a58a10"></div>
<div class="a" style="left:1145px;top:361px;width:12px;height:12px;background:linear-gradient(135deg,#fff2a8,#ffd83a);border:1px solid #a58a10"></div>
<span class="t" style="left:1045px;top:358px;color:#101010">koko - Photos</span>
<div class="a" style="left:1006px;top:376px;width:916px;height:706px;background:#e0e0e0;border:1px solid #989898;box-shadow:inset 2px 2px 0 #fcfcfc, inset -1px -1px 0 #d0d0d0"></div>
<div class="a" style="left:1010px;top:380px;width:908px;height:698px;border:1px solid #a0a0a0;background:transparent"></div>
<div class="a" style="left:1011px;top:381px;width:904px;height:694px;background:#000"></div>
<div class="a" style="left:1011px;top:381px;width:904px;height:40px;background:#e0e1e2"></div>
<svg class="a" style="left:1025px;top:392px;" width="10" height="18" viewBox="0 0 10 18"><path d="M9 1L1.2 9L9 17" fill="none" stroke="#3a3d40" stroke-width="1.3"/></svg>
<span class="t" style="left:1050px;top:390px;font-size:17.5px;line-height:22px;letter-spacing:-.3px">gear-25.08.png</span>
<svg class="a" style="left:1579px;top:390px;" width="22" height="21" viewBox="0 0 22 21"><path d="M11 1.5L13.8 8L20.8 8.6L15.5 13.2L17.2 20L11 16.3L4.8 20L6.5 13.2L1.2 8.6L8.2 8Z" fill="#f4f4f4" stroke="#4a4d50" stroke-width="1.2" stroke-linejoin="round"/></svg>
<span class="t" style="left:1604px;top:394px;font-size:13.3px;letter-spacing:-.4px">Favorite</span>
<svg class="a" style="left:1672px;top:392px;" width="18" height="18" viewBox="0 0 18 18"><path d="M2 16L3 11.5L12 2.5Q13.5 1.5 15 3Q16.5 4.5 15.5 6L6.5 15Z" fill="none" stroke="#33373a" stroke-width="1.5"/><path d="M11 4L14 7" stroke="#33373a" stroke-width="2.2"/><circle cx="3.6" cy="14.4" r="1.6" fill="none" stroke="#33373a" stroke-width="1"/></svg>
<span class="t" style="left:1695px;top:394px;font-size:13.3px;letter-spacing:-.4px">Edit</span>
<svg class="a" style="left:1740px;top:392px;" width="18" height="18" viewBox="0 0 18 18"><circle cx="15" cy="3" r="2.1" fill="#33373a"/><circle cx="15" cy="15.5" r="2.1" fill="#33373a"/><circle cx="3" cy="9" r="1.7" fill="#33373a"/><circle cx="7.5" cy="6.8" r="1" fill="#33373a"/><circle cx="11" cy="5" r="1" fill="#33373a"/><circle cx="7.5" cy="11.2" r="1" fill="#33373a"/><circle cx="11" cy="13.2" r="1" fill="#33373a"/></svg>
<span class="t" style="left:1763px;top:394px;font-size:13.3px;letter-spacing:-.4px">Share</span>
<svg class="a" style="left:1819px;top:392px;" width="18" height="18" viewBox="0 0 18 18"><circle cx="9" cy="9" r="7.6" fill="none" stroke="#33373a" stroke-width="1.2"/><path d="M9 7.8V13.5" stroke="#33373a" stroke-width="1.6"/><circle cx="9" cy="5" r="1.1" fill="#33373a"/></svg>
<span class="t" style="left:1842px;top:394px;font-size:13.3px;letter-spacing:-.4px">Info</span>
<div class="a" style="left:1895.3px;top:394px;width:2.4px;height:2.4px;background:#232629;border-radius:50%"></div>
<div class="a" style="left:1895.3px;top:399.7px;width:2.4px;height:2.4px;background:#232629;border-radius:50%"></div>
<div class="a" style="left:1895.3px;top:405.4px;width:2.4px;height:2.4px;background:#232629;border-radius:50%"></div>
<div class="a w" style="left:1011px;top:421px;width:904px;height:567px"><div class="a" style="left:-1011px;top:-421px;width:1920px;height:1080px">
<div class="a" style="left:1012px;top:450px;width:290px;height:12px;background:linear-gradient(#6a6a6a,#3c3c3c);border:1px solid #8a8a8a;border-bottom:none"></div>
<div class="a" style="left:1014px;top:453px;width:7px;height:7px;background:#5a5a5a;border:1px solid #c0c0c0"></div>
<div class="a" style="left:1291px;top:453px;width:4px;height:4px;border:1px solid #a8a8a8"></div>
<div class="a" style="left:1293px;top:455px;width:5px;height:5px;border:1px solid #a8a8a8"></div>
<span class="t" style="left:1029px;top:451px;font-size:5.66px;line-height:10px;letter-spacing:0;color:#e4e4e4;font-weight:bold">Evaluation of duchainify projects/mediawiki-1.15.1 (massif.out.duchainify.bz2) - Massif</span>
<div class="a" style="left:1012px;top:461px;width:264px;height:232px;background:#000;border-left:1px solid #9a9a9a"></div>
<div class="a" style="left:1013px;top:462px;width:262px;height:12px;background:linear-gradient(#3a3a3a,#0a0a0a 60%,#000);border-bottom:1px solid #2a2a2a"></div>
<span class="t" style="left:1017px;top:463px;font-size:6.15px;line-height:10px;letter-spacing:0;color:#c8c8c8;">File</span>
<span class="t" style="left:1033px;top:463px;font-size:6.15px;line-height:10px;letter-spacing:0;color:#c8c8c8;">View</span>
<span class="t" style="left:1053px;top:463px;font-size:6.15px;line-height:10px;letter-spacing:0;color:#c8c8c8;">Settings</span>
<span class="t" style="left:1082px;top:463px;font-size:6.15px;line-height:10px;letter-spacing:0;color:#c8c8c8;">Help</span>
<div class="a" style="left:1013px;top:474px;width:262px;height:18px;background:linear-gradient(#1a1a1a,#000)"></div>
<div class="a" style="left:1017px;top:479px;width:8px;height:7px;background:#f0b030;border:1px solid #b07a10"></div>
<span class="t" style="left:1027px;top:478px;font-size:6.15px;line-height:10px;letter-spacing:0;color:#b8b8b8;">Open...</span>
<span class="t" style="left:1054px;top:478px;font-size:6.15px;line-height:10px;letter-spacing:0;color:#b8b8b8;">-</span>
<svg class="a" style="left:1060px;top:478px;" width="9" height="9" viewBox="0 0 9 9"><path d="M1 1L8 8M8 1L1 8" stroke="#e02020" stroke-width="2.4"/></svg>
<span class="t" style="left:1071px;top:478px;font-size:6.15px;line-height:10px;letter-spacing:0;color:#b8b8b8;">Close</span>
<span class="t" style="left:1101px;top:478px;font-size:6.15px;line-height:10px;letter-spacing:0;color:#b8b8b8;">Shorten Templates</span>
<svg class="a" style="left:1161px;top:478px;" width="9" height="10" viewBox="0 0 9 10"><path d="M1.5 0V10" stroke="#c8c8c8"/><path d="M2 1L9 3L2 6Z" fill="#e02020"/></svg>
<span class="t" style="left:1172px;top:478px;font-size:6.15px;line-height:10px;letter-spacing:0;color:#b8b8b8;">Select Peak Snapshot</span>
<div class="a" style="left:1237px;top:475px;width:38px;height:17px;background:#2a2a2a"></div>
<div class="a" style="left:1240px;top:479px;width:8px;height:8px;background:linear-gradient(#3070d0,#30a060);border-left:1px solid #e03030"></div>
<span class="t" style="left:1250px;top:478px;font-size:6.15px;line-height:10px;letter-spacing:0;color:#b8b8b8;">Toggle To</span>
<div class="a" style="left:1016px;top:494px;width:83px;height:11px;background:#101010;border:1px solid #5a5a5a;border-bottom:none"></div>
<span class="t" style="left:1019px;top:494px;font-size:5.74px;line-height:10px;letter-spacing:0;color:#c8c8c8;">massif.out.duchainify.bz2  ×</span>
<span class="t" style="left:1124px;top:502px;font-size:6.31px;line-height:10px;letter-spacing:0;color:#f0f0f0;">Memory consumption of duchainify</span>
<span class="t" style="left:1126px;top:510px;font-size:5.99px;line-height:10px;letter-spacing:0;color:#e0e0e0;font-style:italic">Peak of 163.2 MiB at snapshot #67</span>
<svg class="a" style="left:1012px;top:520px" width="264" height="174" viewBox="1012 520 264 174"><g stroke="#e0e0e0" stroke-width=".8"><path d="M1131.3 534V693" opacity=".7"/><path d="M1147.2 534V693" opacity=".7"/><path d="M1163.3 534V693" opacity=".7"/><path d="M1179.4 534V693" opacity=".7"/><path d="M1194.6 534V693" opacity=".7"/><path d="M1210.3 534V693" opacity=".7"/><path d="M1226.4 534V693" opacity=".7"/><path d="M1242.3 534V693" opacity=".7"/><path d="M1258.4 534V693" opacity=".7"/><path d="M1036.4 623V693" opacity=".7"/><path d="M1052.5 623V693" opacity=".7"/><path d="M1068.2 623V693" opacity=".7"/><path d="M1083.8 623V693" opacity=".7"/><path d="M1099.5 623V693" opacity=".7"/><path d="M1115.6 623V693" opacity=".7"/><path d="M1122 549.6H1275" opacity="0.85"/><path d="M1122 564.7H1275" opacity="0.45"/><path d="M1122 579.7H1275" opacity="0.85"/><path d="M1122 594.8H1275" opacity="0.45"/><path d="M1122 609.8H1275" opacity="0.85"/><path d="M1020 625H1275" opacity="0.45"/><path d="M1020 639.9H1275" opacity="0.85"/><path d="M1020 655H1275" opacity="0.45"/><path d="M1020 670H1275" opacity="0.85"/><path d="M1020 685H1275" opacity="0.45"/></g><path d="M1020.5 623V693" stroke="#2020e0" stroke-width="1"/><path d="M1030 693L1032 674L1040 660L1050 653L1060 650.5L1068 649.5L1070 660L1072 693Z M1079 693L1084 673L1089 693Z M1112 693L1119 665L1126 693Z M1140 693L1144 681L1147 679L1150 693Z M1152 693L1155 677L1159 693Z M1165 693L1170 684L1172 693Z" fill="#6e0000" fill-opacity=".75" stroke="#e01010" stroke-width="1"/><path d="M1034 693V668M1038 693V662M1042 693V658M1046 693V655M1050 693V653M1054 693V652M1058 693V651M1062 693V650.5M1066 693V650" stroke="#c00000" stroke-width=".6"/></svg>
<div class="a" style="left:1016px;top:524px;width:106px;height:99px;background:rgba(176,176,176,.93)"></div>
<div class="a" style="left:1016px;top:524px;width:9px;height:9px;background:#ff0000;border:1px solid rgba(0,0,0,.35)"></div>
<span class="m" style="left:1027px;top:524px;font-size:3.75px;line-height:9px;color:#4a5a6a;letter-spacing:0">      Total Memory Heap Consumption</span>
<div class="a" style="left:1016px;top:533px;width:9px;height:9px;background:#0000ff;border:1px solid rgba(0,0,0,.35)"></div>
<span class="m" style="left:1027px;top:533px;font-size:3.75px;line-height:9px;color:#4a5a6a;letter-spacing:0">Php::Parser::parseCompoundVariableWit...</span>
<div class="a" style="left:1025px;top:533px;width:97px;height:1px;background:rgba(230,230,230,.6)"></div>
<div class="a" style="left:1016px;top:542px;width:9px;height:9px;background:#0060ff;border:1px solid rgba(0,0,0,.35)"></div>
<span class="m" style="left:1027px;top:542px;font-size:3.75px;line-height:9px;color:#4a5a6a;letter-spacing:0">Php::Parser::parseFunctionDeclaration...</span>
<div class="a" style="left:1025px;top:542px;width:97px;height:1px;background:rgba(230,230,230,.6)"></div>
<div class="a" style="left:1016px;top:551px;width:9px;height:9px;background:#00c8ff;border:1px solid rgba(0,0,0,.35)"></div>
<span class="m" style="left:1027px;top:551px;font-size:3.75px;line-height:9px;color:#4a5a6a;letter-spacing:0">QString  fromLatin1_helper(char const...</span>
<div class="a" style="left:1025px;top:551px;width:97px;height:1px;background:rgba(230,230,230,.6)"></div>
<div class="a" style="left:1016px;top:560px;width:9px;height:9px;background:#00ffc0;border:1px solid rgba(0,0,0,.35)"></div>
<span class="m" style="left:1027px;top:560px;font-size:3.75px;line-height:9px;color:#4a5a6a;letter-spacing:0">KDevCpp::ItemRepositoryRegistry::reg...</span>
<div class="a" style="left:1025px;top:560px;width:97px;height:1px;background:rgba(230,230,230,.6)"></div>
<div class="a" style="left:1016px;top:569px;width:9px;height:9px;background:#00ff40;border:1px solid rgba(0,0,0,.35)"></div>
<span class="m" style="left:1027px;top:569px;font-size:3.75px;line-height:9px;color:#4a5a6a;letter-spacing:0">Php::Parser::tokenize(QString const&amp;,</span>
<div class="a" style="left:1025px;top:569px;width:97px;height:1px;background:rgba(230,230,230,.6)"></div>
<div class="a" style="left:1016px;top:578px;width:9px;height:9px;background:#00ff00;border:1px solid rgba(0,0,0,.35)"></div>
<span class="m" style="left:1027px;top:578px;font-size:3.75px;line-height:9px;color:#4a5a6a;letter-spacing:0">Php::Parser::parseShiftExpression(Php</span>
<div class="a" style="left:1025px;top:578px;width:97px;height:1px;background:rgba(230,230,230,.6)"></div>
<div class="a" style="left:1016px;top:587px;width:9px;height:9px;background:#80ff00;border:1px solid rgba(0,0,0,.35)"></div>
<span class="m" style="left:1027px;top:587px;font-size:3.75px;line-height:9px;color:#4a5a6a;letter-spacing:0">Php::Parser::parseVarExpression(Php:</span>
<div class="a" style="left:1025px;top:587px;width:97px;height:1px;background:rgba(230,230,230,.6)"></div>
<div class="a" style="left:1016px;top:596px;width:9px;height:9px;background:#ffff00;border:1px solid rgba(0,0,0,.35)"></div>
<span class="m" style="left:1027px;top:596px;font-size:3.75px;line-height:9px;color:#4a5a6a;letter-spacing:0">Php::Parser::parseUnaryExpression(Php</span>
<div class="a" style="left:1025px;top:596px;width:97px;height:1px;background:rgba(230,230,230,.6)"></div>
<div class="a" style="left:1016px;top:605px;width:9px;height:9px;background:#ffa000;border:1px solid rgba(0,0,0,.35)"></div>
<span class="m" style="left:1027px;top:605px;font-size:3.75px;line-height:9px;color:#4a5a6a;letter-spacing:0">Php::Parser::parseAssignmentExpressio...</span>
<div class="a" style="left:1025px;top:605px;width:97px;height:1px;background:rgba(230,230,230,.6)"></div>
<div class="a" style="left:1016px;top:614px;width:9px;height:9px;background:#ff3000;border:1px solid rgba(0,0,0,.35)"></div>
<span class="m" style="left:1027px;top:614px;font-size:3.75px;line-height:9px;color:#4a5a6a;letter-spacing:0">KDevPG::MemoryPool::allocate(unsigned...</span>
<div class="a" style="left:1025px;top:614px;width:97px;height:1px;background:rgba(230,230,230,.6)"></div>
<div class="a" style="left:1275px;top:450px;width:52px;height:12px;background:linear-gradient(#b0b0b0,#7a7a7a 55%,#5e5e5e);border:1px solid #8a8a8a;border-bottom:none"></div>
<div class="a" style="left:1277px;top:453px;width:7px;height:7px;background:#8a8a8a;border:1px solid #c0c0c0"></div>
<div class="a" style="left:1316px;top:453px;width:4px;height:4px;border:1px solid #a8a8a8"></div>
<div class="a" style="left:1318px;top:455px;width:5px;height:5px;border:1px solid #a8a8a8"></div>
<span class="t" style="left:1291px;top:451px;font-size:5.82px;line-height:10px;letter-spacing:0;color:#e4e4e4;font-weight:bold">Kiriki</span>
<div class="a" style="left:1327px;top:450px;width:219px;height:12px;background:#0c2a48"></div>
<span class="t" style="left:1339px;top:450px;font-size:6.15px;line-height:10px;letter-spacing:0;color:#d8e0e8;">Volume</span>
<span class="t" style="left:1459px;top:450px;font-size:6.15px;line-height:10px;letter-spacing:0;color:#d8e0e8;">-18 dB</span>
<div class="a" style="left:1546px;top:451px;width:26px;height:11px;background:#a8a8a8;border:1px solid #d0d0d0"></div>
<span class="t" style="left:1548px;top:451px;font-size:3.69px;line-height:10px;letter-spacing:0;color:#787878;">Krita - Neo...</span>
<div class="a" style="left:1574px;top:451px;width:27px;height:11px;background:#a8a8a8;border:1px solid #d0d0d0"></div>
<span class="t" style="left:1576px;top:451px;font-size:3.69px;line-height:10px;letter-spacing:0;color:#787878;">Haiku Com...</span>
<div class="a" style="left:1602px;top:451px;width:2px;height:11px;background:#d8d8d8"></div>
<div class="a" style="left:1606px;top:451px;width:5px;height:3px;background:#a8a8a8"></div>
<div class="a" style="left:1275px;top:461px;width:338px;height:240px;background:#000;border-left:1px solid #9a9a9a"></div>
<div class="a" style="left:1276px;top:462px;width:336px;height:12px;background:linear-gradient(#3a3a3a,#0a0a0a 60%,#000);border-bottom:1px solid #2a2a2a"></div>
<span class="t" style="left:1279px;top:463px;font-size:6.15px;line-height:10px;letter-spacing:0;color:#c8c8c8;">Game</span>
<span class="t" style="left:1303px;top:463px;font-size:6.15px;line-height:10px;letter-spacing:0;color:#c8c8c8;">Move</span>
<span class="t" style="left:1324px;top:463px;font-size:6.15px;line-height:10px;letter-spacing:0;color:#c8c8c8;">Settings</span>
<span class="t" style="left:1352px;top:463px;font-size:6.15px;line-height:10px;letter-spacing:0;color:#c8c8c8;">Help</span>
<span class="t" style="left:1290px;top:479px;font-size:6.15px;line-height:10px;letter-spacing:0;color:#e8e8e8;">Roll 1 of 3</span>
<div class="a" style="left:1387px;top:479px;width:12px;height:12px;background:linear-gradient(#8ad070,#4a9a3a);border:1px solid #2a6a1a"></div>
<div class="a" style="left:1390px;top:482px;width:6px;height:6px;background:#b8b8b8;border:1px solid #707070"></div>
<span class="t" style="left:1403px;top:480px;font-size:6.15px;line-height:10px;letter-spacing:0;color:#d8d8d8;">Albert</span>
<div class="a" style="left:1428px;top:479px;width:12px;height:12px;background:linear-gradient(#8ad070,#4a9a3a);border:1px solid #2a6a1a"></div>
<div class="a" style="left:1431px;top:482px;width:6px;height:6px;background:#b8b8b8;border:1px solid #707070"></div>
<span class="t" style="left:1444px;top:480px;font-size:6.15px;line-height:10px;letter-spacing:0;color:#d8d8d8;">Janet</span>
<div class="a" style="left:1469px;top:479px;width:12px;height:12px;background:linear-gradient(#8ad070,#4a9a3a);border:1px solid #2a6a1a"></div>
<div class="a" style="left:1472px;top:482px;width:6px;height:6px;background:#b8b8b8;border:1px solid #707070"></div>
<span class="t" style="left:1485px;top:480px;font-size:6.15px;line-height:10px;letter-spacing:0;color:#d8d8d8;">James</span>
<div class="a" style="left:1510px;top:479px;width:12px;height:12px;background:linear-gradient(#8ad070,#4a9a3a);border:1px solid #2a6a1a"></div>
<div class="a" style="left:1513px;top:482px;width:6px;height:6px;background:#b8b8b8;border:1px solid #707070"></div>
<span class="t" style="left:1526px;top:480px;font-size:6.15px;line-height:10px;letter-spacing:0;color:#d8d8d8;">Sandra</span>
<div class="a" style="left:1551px;top:479px;width:12px;height:12px;background:linear-gradient(#8ad070,#4a9a3a);border:1px solid #2a6a1a"></div>
<div class="a" style="left:1554px;top:482px;width:6px;height:6px;background:#b8b8b8;border:1px solid #707070"></div>
<span class="t" style="left:1567px;top:480px;font-size:6.15px;line-height:10px;letter-spacing:0;color:#d8d8d8;">Thom...</span>
<div class="a" style="left:1592px;top:479px;width:12px;height:12px;background:linear-gradient(#8ad070,#4a9a3a);border:1px solid #2a6a1a"></div>
<div class="a" style="left:1595px;top:482px;width:6px;height:6px;background:#b8b8b8;border:1px solid #707070"></div>
<svg class="a" style="left:1281px;top:491px" width="43" height="43" viewBox="-4 -4 43 43"><defs><linearGradient id="dg1" x1="0" y1="0" x2="1" y2="1"><stop offset="0" stop-color="#f03434"/><stop offset=".5" stop-color="#cc1218"/><stop offset="1" stop-color="#7e060c"/></linearGradient></defs><g transform="rotate(12 17.5 17.5)"><rect x="1" y="1" width="33" height="33" rx="3" fill="url(#dg1)" stroke="#5a0408" stroke-width="1.2"/><path d="M3 10.5 Q17.5 4.2 32 8.4 L32 4 Q32 3 31 3 L4 3 Q3 3 3 4Z" fill="#ff8a8a" opacity=".28"/><circle cx="10.5" cy="7.7" r="2.5" fill="#f0f0f0" stroke="#6a0a0a" stroke-width=".7"/><circle cx="10.5" cy="17.5" r="2.5" fill="#f0f0f0" stroke="#6a0a0a" stroke-width=".7"/><circle cx="10.5" cy="27.3" r="2.5" fill="#f0f0f0" stroke="#6a0a0a" stroke-width=".7"/><circle cx="24.5" cy="7.7" r="2.5" fill="#f0f0f0" stroke="#6a0a0a" stroke-width=".7"/><circle cx="24.5" cy="17.5" r="2.5" fill="#f0f0f0" stroke="#6a0a0a" stroke-width=".7"/><circle cx="24.5" cy="27.3" r="2.5" fill="#f0f0f0" stroke="#6a0a0a" stroke-width=".7"/></g></svg>
<svg class="a" style="left:1282px;top:534px" width="42" height="42" viewBox="-4 -4 42 42"><defs><linearGradient id="dg2" x1="0" y1="0" x2="1" y2="1"><stop offset="0" stop-color="#f03434"/><stop offset=".5" stop-color="#cc1218"/><stop offset="1" stop-color="#7e060c"/></linearGradient></defs><g transform="rotate(-9 17.0 17.0)"><rect x="1" y="1" width="32" height="32" rx="3" fill="url(#dg2)" stroke="#5a0408" stroke-width="1.2"/><path d="M3 10.2 Q17.0 4.08 31 8.16 L31 4 Q31 3 30 3 L4 3 Q3 3 3 4Z" fill="#ff8a8a" opacity=".28"/><circle cx="9.2" cy="9.2" r="2.4" fill="#f0f0f0" stroke="#6a0a0a" stroke-width=".7"/><circle cx="24.8" cy="9.2" r="2.4" fill="#f0f0f0" stroke="#6a0a0a" stroke-width=".7"/><circle cx="9.2" cy="24.8" r="2.4" fill="#f0f0f0" stroke="#6a0a0a" stroke-width=".7"/><circle cx="24.8" cy="24.8" r="2.4" fill="#f0f0f0" stroke="#6a0a0a" stroke-width=".7"/></g></svg>
<svg class="a" style="left:1284px;top:577px" width="40" height="40" viewBox="-4 -4 40 40"><defs><linearGradient id="dg3" x1="0" y1="0" x2="1" y2="1"><stop offset="0" stop-color="#f03434"/><stop offset=".5" stop-color="#cc1218"/><stop offset="1" stop-color="#7e060c"/></linearGradient></defs><g transform="rotate(-8 16.0 16.0)"><rect x="1" y="1" width="30" height="30" rx="3" fill="url(#dg3)" stroke="#5a0408" stroke-width="1.2"/><path d="M3 9.6 Q16.0 3.84 29 7.68 L29 4 Q29 3 28 3 L4 3 Q3 3 3 4Z" fill="#ff8a8a" opacity=".28"/><circle cx="16.0" cy="16.0" r="2.2" fill="#f0f0f0" stroke="#6a0a0a" stroke-width=".7"/></g></svg>
<svg class="a" style="left:1286px;top:620px" width="39" height="39" viewBox="-4 -4 39 39"><defs><linearGradient id="dg4" x1="0" y1="0" x2="1" y2="1"><stop offset="0" stop-color="#f03434"/><stop offset=".5" stop-color="#cc1218"/><stop offset="1" stop-color="#7e060c"/></linearGradient></defs><g transform="rotate(2 15.5 15.5)"><rect x="1" y="1" width="29" height="29" rx="3" fill="url(#dg4)" stroke="#5a0408" stroke-width="1.2"/><path d="M3 9.299999999999999 Q15.5 3.7199999999999998 28 7.4399999999999995 L28 4 Q28 3 27 3 L4 3 Q3 3 3 4Z" fill="#ff8a8a" opacity=".28"/><circle cx="7.8" cy="7.8" r="2.2" fill="#f0f0f0" stroke="#6a0a0a" stroke-width=".7"/><circle cx="15.5" cy="15.5" r="2.2" fill="#f0f0f0" stroke="#6a0a0a" stroke-width=".7"/><circle cx="23.2" cy="23.2" r="2.2" fill="#f0f0f0" stroke="#6a0a0a" stroke-width=".7"/></g></svg>
<span class="t" style="left:1331px;top:492px;font-size:5.33px;line-height:10px;letter-spacing:0;color:#c8c8c8;">1s</span>
<span class="t" style="left:1331px;top:500px;font-size:5.33px;line-height:10px;letter-spacing:0;color:#c8c8c8;">2s</span>
<span class="t" style="left:1331px;top:508px;font-size:5.33px;line-height:10px;letter-spacing:0;color:#c8c8c8;">3s</span>
<span class="t" style="left:1331px;top:516px;font-size:5.33px;line-height:10px;letter-spacing:0;color:#c8c8c8;">4s</span>
<span class="t" style="left:1331px;top:524px;font-size:5.33px;line-height:10px;letter-spacing:0;color:#c8c8c8;">5s</span>
<span class="t" style="left:1331px;top:532px;font-size:5.33px;line-height:10px;letter-spacing:0;color:#c8c8c8;">6s</span>
<span class="t" style="left:1331px;top:540px;font-size:5.74px;line-height:10px;letter-spacing:0;color:#f0f0f0;">Bonus if &gt; 62</span>
<span class="t" style="left:1331px;top:548px;font-size:5.74px;line-height:10px;letter-spacing:0;color:#f0f0f0;">Upper total</span>
<span class="t" style="left:1402px;top:516px;font-size:5.33px;line-height:10px;letter-spacing:0;color:#d8d8d8;">12</span>
<span class="t" style="left:1402px;top:548px;font-size:5.74px;line-height:10px;letter-spacing:0;color:#f0f0f0;">12</span>
<span class="t" style="left:1444px;top:492px;font-size:5.33px;line-height:10px;letter-spacing:0;color:#c8c8c8;">3</span>
<span class="t" style="left:1444px;top:548px;font-size:5.74px;line-height:10px;letter-spacing:0;color:#f0f0f0;">3</span>
<span class="t" style="left:1527px;top:500px;font-size:5.33px;line-height:10px;letter-spacing:0;color:#c8c8c8;">6</span>
<span class="t" style="left:1527px;top:548px;font-size:5.74px;line-height:10px;letter-spacing:0;color:#f0f0f0;">6</span>
<span class="t" style="left:1331px;top:564px;font-size:5.33px;line-height:10px;letter-spacing:0;color:#c8c8c8;">3 of a Kind</span>
<span class="t" style="left:1607px;top:564px;font-size:4.92px;line-height:10px;letter-spacing:0;color:#c8c8c8;">24</span>
<span class="t" style="left:1331px;top:572px;font-size:4.92px;line-height:10px;letter-spacing:0;color:#a8a8a8;">4</span>
<span class="t" style="left:1331px;top:580px;font-size:4.92px;line-height:10px;letter-spacing:0;color:#a8a8a8;">F</span>
<span class="t" style="left:1331px;top:588px;font-size:4.92px;line-height:10px;letter-spacing:0;color:#a8a8a8;">S</span>
<span class="t" style="left:1331px;top:596px;font-size:4.92px;line-height:10px;letter-spacing:0;color:#a8a8a8;">L</span>
<div class="a" style="left:1320px;top:604px;width:17px;height:53px;background:#f2f2f2;border:1px solid #8a8a8a"></div>
<div class="a" style="left:1321px;top:605px;width:15px;height:11px;background:linear-gradient(#7a7a7a,#4a4a4a)"></div>
<div class="a" style="left:1323px;top:607px;width:5px;height:6px;border:1px solid #b8b8b8;background:#666"></div>
<div class="a" style="left:1328px;top:621px;width:8px;height:1px;background:#8a8a8a"></div>
<div class="a" style="left:1328px;top:624px;width:8px;height:1px;background:#8a8a8a"></div>
<div class="a" style="left:1328px;top:627px;width:8px;height:1px;background:#8a8a8a"></div>
<span class="t" style="left:1328px;top:647px;font-size:5.33px;line-height:10px;letter-spacing:0;color:#6a6a6a;">Fro</span>
<div class="a" style="left:1012px;top:692px;width:200px;height:12px;background:linear-gradient(#6a6a6a,#3c3c3c);border:1px solid #8a8a8a;border-bottom:none"></div>
<div class="a" style="left:1014px;top:695px;width:7px;height:7px;background:#5a5a5a;border:1px solid #c0c0c0"></div>
<div class="a" style="left:1201px;top:695px;width:4px;height:4px;border:1px solid #a8a8a8"></div>
<div class="a" style="left:1203px;top:697px;width:5px;height:5px;border:1px solid #a8a8a8"></div>
<span class="t" style="left:1054px;top:693px;font-size:5.82px;line-height:10px;letter-spacing:0;color:#e4e4e4;font-weight:bold">/media/Examples/rocs/BreadthFirstSear</span>
<div class="a" style="left:1012px;top:703px;width:309px;height:253px;background:#000;border-left:1px solid #9a9a9a"></div>
<div class="a" style="left:1013px;top:704px;width:307px;height:12px;background:linear-gradient(#3a3a3a,#0a0a0a 60%,#000);border-bottom:1px solid #2a2a2a"></div>
<span class="t" style="left:1016px;top:705px;font-size:6.15px;line-height:10px;letter-spacing:0;color:#c8c8c8;">File</span>
<span class="t" style="left:1031.5px;top:705px;font-size:6.15px;line-height:10px;letter-spacing:0;color:#c8c8c8;">Script Document</span>
<span class="t" style="left:1084.5px;top:705px;font-size:6.15px;line-height:10px;letter-spacing:0;color:#c8c8c8;">Graph Document</span>
<span class="t" style="left:1136.5px;top:705px;font-size:6.15px;line-height:10px;letter-spacing:0;color:#c8c8c8;">Settings</span>
<span class="t" style="left:1165px;top:705px;font-size:6.15px;line-height:10px;letter-spacing:0;color:#c8c8c8;">H</span>
<div class="a" style="left:1024px;top:718px;width:36px;height:12px;background:#1c1c1c;border:1px solid #4a4a4a"></div>
<span class="t" style="left:1027px;top:719px;font-size:5.74px;line-height:10px;letter-spacing:0;color:#c8c8c8;">New Graph</span>
<div class="a" style="left:1017px;top:731px;width:153px;height:99px;background:#fff"></div>
<div class="a" style="left:1018px;top:733px;width:9px;height:9px;background:#c8c8c8;border:1px solid #8a8a8a"></div>
<svg class="a" style="left:1019px;top:734px;" width="8" height="8" viewBox="0 0 8 8"><path d="M1 0L7 4.5L4 5L5.5 8L4.5 8L3 5.5L1 7Z" fill="#222"/></svg>
<div class="a" style="left:1018px;top:744px;width:8px;height:8px;border:1px solid #555;border-radius:50%"></div>
<svg class="a" style="left:1018px;top:756px;" width="9" height="9" viewBox="0 0 9 9"><path d="M1 8L8 1" stroke="#b0b0b0"/><circle cx="1.5" cy="7.5" r="1" fill="#999"/><circle cx="7.5" cy="1.5" r="1" fill="#999"/></svg>
<div class="a" style="left:1018px;top:768px;width:8px;height:8px;background:#333"></div>
<svg class="a" style="left:1019px;top:769px;" width="6" height="6" viewBox="0 0 6 6"><path d="M1 1L5 5M5 1L1 5" stroke="#fff" stroke-width="1.2"/></svg>
<div class="a" style="left:1014px;top:836px;width:156px;height:1px;background:repeating-linear-gradient(90deg,#6a6a6a 0 1px,#000 1px 3px)"></div>
<div class="a" style="left:1020px;top:845px;width:64px;height:105px;border:1px solid #222"></div>
<div class="a" style="left:1089px;top:838px;width:1px;height:112px;background:repeating-linear-gradient(#3a3a3a 0 1px,#000 1px 3px)"></div>
<span class="t" style="left:1097px;top:847px;font-size:5.74px;line-height:10px;letter-spacing:0;color:#d8d8d8;">Script output:</span>
<div class="a" style="left:1137px;top:849px;width:5px;height:5px;background:#e8c020"></div>
<span class="t" style="left:1151px;top:847px;font-size:4.92px;line-height:10px;letter-spacing:0;color:#c02020;">S</span>
<svg class="a" style="left:1166px;top:848px;" width="5" height="8" viewBox="0 0 5 8"><path d="M5 0L0 4L5 8Z" fill="#e8a020"/></svg>
<div class="a" style="left:1097px;top:943px;width:78px;height:1px;background:#8a8a8a"></div>
<div class="a" style="left:1175px;top:850px;width:1px;height:94px;background:#2a2a2a"></div>
<span class="t" style="left:1194px;top:883px;font-size:5.74px;line-height:10px;letter-spacing:0;color:#5a5a5a;">Stop</span>
<svg class="a" style="left:1195px;top:897px;" width="11" height="11" viewBox="0 0 11 11"><path d="M10 1L4 4L2 9L7 7Z" fill="#e03030"/><path d="M2 9L1 10" stroke="#f0a020" stroke-width="1.5"/></svg>
<span class="t" style="left:1188px;top:910px;font-size:5.74px;line-height:10px;letter-spacing:0;color:#d8d8d8;">Debugger</span>
<div class="a" style="left:1235px;top:892px;width:21px;height:10px;background:#3a3a3a;border:1px solid #b8b8b8"></div>
<div class="a" style="left:1262px;top:891px;width:13px;height:13px;background:linear-gradient(#7a7a7a,#3a3a3a);border:1px solid #555"></div>
<span class="t" style="left:1282px;top:892px;font-size:5.74px;line-height:10px;letter-spacing:0;color:#d8d8d8;">Bidirectional</span>
<div class="a" style="left:1230px;top:953px;width:90px;height:1px;background:#333"></div>
<div class="a" style="left:1320px;top:800px;width:195px;height:156px;background:#fff;border-left:1px solid #9a9a9a"></div>
<div class="a" style="left:1321px;top:931px;width:194px;height:25px;background:#f5f5f5"></div>
<svg class="a" style="left:1328px;top:881px;" width="13" height="13" viewBox="0 0 13 13"><rect x="2" y="0" width="9" height="9" rx="2" fill="none" stroke="#222" stroke-width="1.6"/><path d="M0 6H13M3 9V12M10 9V12" stroke="#222" stroke-width="1.6"/></svg>
<span class="t" style="left:1345px;top:878px;font-size:5.33px;line-height:10px;letter-spacing:0;color:#555;">Bus</span>
<span class="t" style="left:1345px;top:887px;font-size:5.58px;line-height:10px;letter-spacing:0;color:#8a8a8a;">Local or regional bus services</span>
<svg class="a" style="left:1328px;top:909px;" width="13" height="14" viewBox="0 0 13 14"><rect x="4" y="0" width="5" height="3" fill="#222"/><path d="M2 3H11V8H2Z M0 8H13L11 12H2Z" fill="#222"/><path d="M0 13.5H13" stroke="#222"/><rect x="4" y="4.5" width="5" height="2" fill="#fff"/></svg>
<span class="t" style="left:1345px;top:906px;font-size:5.74px;line-height:10px;letter-spacing:0;color:#444;">Ferry</span>
<span class="t" style="left:1345px;top:916px;font-size:5.58px;line-height:10px;letter-spacing:0;color:#8a8a8a;">Boats or ferries</span>
<div class="a" style="left:1659px;top:724px;width:257px;height:32px;background:#19232f"></div>
<div class="a" style="left:1686px;top:726px;width:230px;height:231px;background:#eff0f1;border:1px solid #8a8a8a"></div>
<div class="a" style="left:1687px;top:728px;width:228px;height:20px;background:linear-gradient(#f2f2f2,#e4e4e5);border-bottom:1px solid #d0d0d0"></div>
<div class="a" style="left:1692px;top:733px;width:9px;height:1.5px;background:#8a8a8a"></div>
<div class="a" style="left:1692px;top:737px;width:9px;height:1.5px;background:#8a8a8a"></div>
<div class="a" style="left:1692px;top:741px;width:9px;height:1.5px;background:#8a8a8a"></div>
<span class="t" style="left:1706px;top:733px;font-size:7.99px;line-height:10px;letter-spacing:0;color:#4a4a4a;">Box Breathing</span>
<div class="a" style="left:1904px;top:733px;width:10px;height:9px;background:repeating-linear-gradient(90deg,#333 0 1px,#eee 1px 2px)"></div>
<span class="t" style="left:1788px;top:830px;font-size:39px;line-height:44px;letter-spacing:0;color:#1e2124">old</span>
<div class="a" style="left:1514px;top:753px;width:273px;height:203px;background:radial-gradient(ellipse 70px 75px at 88% 30%,rgba(96,18,84,.85) 0,rgba(60,12,54,.5) 50%,rgba(13,11,16,0) 100%),radial-gradient(ellipse 90px 40px at 20% 45%,rgba(70,14,60,.55) 0,rgba(13,11,16,0) 100%),#0e0b11;border:1px solid #6a6a6a"></div>
<div class="a" style="left:1515px;top:870px;width:271px;height:85px;background:linear-gradient(#15200f,#0b0b10 60%)"></div>
<div class="a" style="left:1516px;top:847px;width:67px;height:5px;background:linear-gradient(#ff2a7a,#c0105a)"></div>
<div class="a" style="left:1516px;top:853px;width:67px;height:5px;background:linear-gradient(#20a0f0,#1060c0)"></div>
<div class="a" style="left:1516px;top:859px;width:67px;height:4px;background:linear-gradient(#8ae020,#4a9a10)"></div>
<svg class="a" style="left:1718px;top:826px;" width="68" height="56" viewBox="0 0 68 56"><path d="M0 22L68 8V20L0 26Z" fill="#f0208a"/><path d="M0 27L68 24V35L0 31Z" fill="#18a0e8"/><path d="M0 32L68 38V52L0 36Z" fill="#7ad018"/><path d="M0 36L68 52V56L0 38Z" fill="#2a5a10"/></svg>
<div class="a" style="left:1583px;top:789px;width:135px;height:27px;background:#1f3a30"></div>
<div class="a" style="left:1583px;top:816px;width:135px;height:80px;background:linear-gradient(120deg,#243f34,#3a6a52 50%,#254236)"></div>
<div class="a" style="left:1583px;top:896px;width:135px;height:27px;background:#203a30"></div>
<div class="a" style="left:1583px;top:929px;width:135px;height:21px;background:#0e0e14;border-radius:4px"></div>
<svg class="a" style="left:1686px;top:797px;" width="24" height="13" viewBox="0 0 24 13"><path d="M1 4H14V1L23 6.5L14 12V9H1Z" fill="none" stroke="#f4f4f4" stroke-width="1.3"/></svg>
<div class="a" style="left:1587px;top:846px;width:18px;height:18px;background:#fff"><span class="t" style="left:0;top:1px;width:18px;text-align:center;font-size:11px;color:#222">t</span></div>
<div class="a" style="left:1608.5px;top:846px;width:18px;height:18px;background:#fff"><span class="t" style="left:0;top:1px;width:18px;text-align:center;font-size:11px;color:#222">s</span></div>
<div class="a" style="left:1630px;top:846px;width:18px;height:18px;background:#fff"><span class="t" style="left:0;top:1px;width:18px;text-align:center;font-size:11px;color:#222">a</span></div>
<div class="a" style="left:1651px;top:846px;width:18px;height:18px;background:#fff"><span class="t" style="left:0;top:1px;width:18px;text-align:center;font-size:11px;color:#222">k</span></div>
<div class="a" style="left:1672px;top:846px;width:18px;height:18px;background:#fff"><span class="t" style="left:0;top:1px;width:18px;text-align:center;font-size:11px;color:#222">r</span></div>
<div class="a" style="left:1693px;top:846px;width:18px;height:18px;background:#fff"><span class="t" style="left:0;top:1px;width:18px;text-align:center;font-size:11px;color:#222">s</span></div>
<svg class="a" style="left:1588px;top:900px;" width="16" height="16" viewBox="0 0 16 16"><circle cx="8" cy="8" r="6" fill="none" stroke="#f5a800" stroke-width="2"/></svg>
<svg class="a" style="left:1644px;top:899px;" width="12" height="18" viewBox="0 0 12 18"><circle cx="6" cy="6" r="5" fill="#f5a000"/><rect x="3.5" y="10" width="5" height="5" fill="#e08a00"/><rect x="4.5" y="15" width="3" height="2" fill="#c07000"/></svg>
<svg class="a" style="left:1694px;top:901px;" width="20" height="14" viewBox="0 0 20 14"><path d="M0 7Q10 -4 20 7Q10 18 0 7Z" fill="#f5a000"/><circle cx="10" cy="7" r="3.4" fill="none" stroke="#203a30" stroke-width="2"/></svg>
<div class="a" style="left:1718px;top:809px;width:15px;height:18px;background:#151018;border-radius:3px"></div>
<div class="a" style="left:1718px;top:846px;width:15px;height:18px;background:#151018;border-radius:3px"></div>
<div class="a" style="left:1718px;top:884px;width:15px;height:18px;background:#151018;border-radius:3px"></div>
<svg class="a" style="left:1720px;top:812px;" width="11" height="11" viewBox="0 0 11 11"><path d="M0 4H6V1L11 5.5L6 10V7H0Z" fill="#f4f4f4"/></svg>
<svg class="a" style="left:1721px;top:850px;" width="9" height="9" viewBox="0 0 9 9"><path d="M1 8L5 4" stroke="#f4f4f4" stroke-width="1.6"/><circle cx="6.3" cy="2.7" r="2" fill="#f4f4f4"/></svg>
<div class="a" style="left:1720px;top:888px;width:10px;height:10px;background:#f4f4f4;border-radius:50%"></div>
<span class="t" style="left:1722.5px;top:888px;font-size:6.15px;line-height:10px;letter-spacing:0;color:#111;font-weight:bold">?</span>
<span class="t" style="left:1659px;top:759px;font-size:15px;line-height:20px;font-weight:bold;color:#f0f0f0;letter-spacing:-.5px">GRAM</span>
<svg class="a" style="left:1762px;top:766px;" width="12" height="12" viewBox="0 0 12 12"><path d="M3.5 3A4.5 4.5 0 1 0 8.5 3" fill="none" stroke="#fff" stroke-width="1.3"/><path d="M6 .5V6" stroke="#fff" stroke-width="1.3"/></svg>
<div class="a" style="left:1170px;top:645px;width:72px;height:12px;background:linear-gradient(#b0b0b0,#7a7a7a 55%,#5e5e5e);border:1px solid #8a8a8a;border-bottom:none"></div>
<div class="a" style="left:1172px;top:648px;width:7px;height:7px;background:#8a8a8a;border:1px solid #c0c0c0"></div>
<div class="a" style="left:1231px;top:648px;width:4px;height:4px;border:1px solid #a8a8a8"></div>
<div class="a" style="left:1233px;top:650px;width:5px;height:5px;border:1px solid #a8a8a8"></div>
<span class="t" style="left:1187px;top:646px;font-size:5.82px;line-height:10px;letter-spacing:0;color:#e4e4e4;font-weight:bold">KSnakeDuel</span>
<div class="a" style="left:1170px;top:657px;width:333px;height:226px;background:#000;border:1px solid #8a8a8a"></div>
<div class="a" style="left:1171px;top:658px;width:331px;height:12px;background:linear-gradient(#3a3a3a,#0a0a0a 60%,#000);border-bottom:1px solid #2a2a2a"></div>
<span class="t" style="left:1175px;top:659px;font-size:6.15px;line-height:10px;letter-spacing:0;color:#c8c8c8;">Game</span>
<span class="t" style="left:1198px;top:659px;font-size:6.15px;line-height:10px;letter-spacing:0;color:#c8c8c8;">Settings</span>
<span class="t" style="left:1227px;top:659px;font-size:6.15px;line-height:10px;letter-spacing:0;color:#c8c8c8;">Help</span>
<div class="a" style="left:1172px;top:670px;width:329px;height:197px;background:#d3efd0;background-image:repeating-linear-gradient(0deg,rgba(150,210,150,.35) 0 1px,transparent 1px 3px),repeating-linear-gradient(90deg,rgba(150,210,150,.25) 0 1px,transparent 1px 3px)"></div>
<div class="a" style="left:1176px;top:671.5px;width:321px;height:6.1px;background:radial-gradient(circle at 50% 50%,#62c862 0 1.3px,#1f8a1f 1.9px 2.5px,rgba(31,138,31,0) 3px) 0 0/6.1px 6.1px"></div>
<div class="a" style="left:1176px;top:857.5px;width:321px;height:6.1px;background:radial-gradient(circle at 50% 50%,#62c862 0 1.3px,#1f8a1f 1.9px 2.5px,rgba(31,138,31,0) 3px) 0 0/6.1px 6.1px"></div>
<div class="a" style="left:1176px;top:671.5px;width:6.1px;height:192px;background:radial-gradient(circle at 50% 50%,#62c862 0 1.3px,#1f8a1f 1.9px 2.5px,rgba(31,138,31,0) 3px) 0 0/6.1px 6.1px"></div>
<div class="a" style="left:1490.8px;top:671.5px;width:6.1px;height:192px;background:radial-gradient(circle at 50% 50%,#62c862 0 1.3px,#1f8a1f 1.9px 2.5px,rgba(31,138,31,0) 3px) 0 0/6.1px 6.1px"></div>
<div class="a" style="left:1265px;top:683px;width:2px;height:91px;background:#d87a10;border-left:1px solid #8a4a00"></div>
<div class="a" style="left:1265px;top:772px;width:20px;height:2px;background:#b85a08"></div>
<div class="a" style="left:1283px;top:772px;width:2px;height:6px;background:#6a3a08"></div>
<div class="a" style="left:1254px;top:735px;width:120px;height:66px;background:rgba(70,82,72,.62);border-radius:4px"></div>
<span class="t" style="left:1254px;top:759px;font-size:7.30px;line-height:10px;letter-spacing:0;color:#f4f4f4;letter-spacing:.25px">KSnakeDuel (1 point) versus</span>
<span class="t" style="left:1264px;top:768px;font-size:7.30px;line-height:10px;letter-spacing:0;color:#f4f4f4;letter-spacing:.25px">Press any of your direction</span>
<span class="t" style="left:1287px;top:868px;font-size:5.58px;line-height:10px;letter-spacing:0;color:#c8c8c8;">KSnakeDuel: 1</span>
<span class="t" style="left:1382px;top:868px;font-size:5.58px;line-height:10px;letter-spacing:0;color:#c8c8c8;">Yourself: 0</span>
<div class="a" style="left:1443px;top:868px;width:40px;height:10px;background:linear-gradient(#5a5a5a,#2a2a2a);border:1px solid #6a6a6a"></div>
<div class="a" style="left:1448px;top:872px;width:1.5px;height:4px;background:#e03030"></div>
<div class="a" style="left:1450px;top:870px;width:1.5px;height:6px;background:#30a0e0"></div>
<div class="a" style="left:1452px;top:873px;width:1.5px;height:3px;background:#30c030"></div>
<span class="t" style="left:1457px;top:868px;font-size:6.15px;line-height:10px;letter-spacing:0;color:#a8a8a8;">Easy</span>
<div class="a" style="left:1485px;top:868px;width:5px;height:10px;background:#3a3a3a;border:1px solid #6a6a6a"></div>
<div class="a" style="left:1336px;top:573px;width:62px;height:12px;background:linear-gradient(#b0b0b0,#7a7a7a 55%,#5e5e5e);border:1px solid #8a8a8a;border-bottom:none"></div>
<div class="a" style="left:1338px;top:576px;width:7px;height:7px;background:#8a8a8a;border:1px solid #c0c0c0"></div>
<div class="a" style="left:1387px;top:576px;width:4px;height:4px;border:1px solid #a8a8a8"></div>
<div class="a" style="left:1389px;top:578px;width:5px;height:5px;border:1px solid #a8a8a8"></div>
<span class="t" style="left:1354px;top:574px;font-size:5.82px;line-height:10px;letter-spacing:0;color:#e4e4e4;font-weight:bold">KBackup</span>
<div class="a" style="left:1336px;top:585px;width:125px;height:228px;background:#000;border:1px solid #8a8a8a;border-top-color:#aaa"></div>
<div class="a" style="left:1337px;top:586px;width:123px;height:12px;background:linear-gradient(#3a3a3a,#0a0a0a 60%,#000);border-bottom:1px solid #2a2a2a"></div>
<span class="t" style="left:1341px;top:587px;font-size:6.15px;line-height:10px;letter-spacing:0;color:#c8c8c8;">File</span>
<span class="t" style="left:1357px;top:587px;font-size:6.15px;line-height:10px;letter-spacing:0;color:#c8c8c8;">Settings</span>
<span class="t" style="left:1387px;top:587px;font-size:6.15px;line-height:10px;letter-spacing:0;color:#c8c8c8;">Help</span>
<div class="a" style="left:1338px;top:598px;width:94px;height:10px;background:linear-gradient(#4a4a4a,#2a2a2a)"></div>
<span class="t" style="left:1339px;top:598px;font-size:5.58px;line-height:10px;letter-spacing:0;color:#c8c8c8;">Name</span>
<span class="t" style="left:1401px;top:598px;font-size:5.58px;line-height:10px;letter-spacing:0;color:#c8c8c8;">Size</span>
<span class="t" style="left:1425px;top:598px;font-size:5.58px;line-height:10px;letter-spacing:0;color:#c8c8c8;">L</span>
<svg class="a" style="left:1393px;top:601px;" width="6" height="5" viewBox="0 0 6 5"><path d="M.5 .5L3 3.5L5.5 .5" fill="none" stroke="#e8e8e8" stroke-width="1.2"/></svg>
<div class="a" style="left:1338px;top:616px;width:94px;height:9px;background:#3c3c3c"></div>
<div class="a" style="left:1361px;top:607.8px;width:6.5px;height:6.5px;background:#f4f4f4"></div>
<svg class="a" style="left:1371px;top:607.5px;" width="8" height="7" viewBox="0 0 8 7"><path d="M0 1.5L3 0L8 1L6.5 6.5L2 6.5Z" fill="#d89448"/><rect x="2.8" y="3.2" width="2.4" height="3" fill="#f4e4c8"/></svg>
<span class="t" style="left:1381px;top:606.0px;font-size:5.41px;line-height:10px;letter-spacing:0;color:#d8d8d8;">home</span>
<span class="t" style="left:1401.5px;top:606.0px;font-size:5.41px;line-height:10px;letter-spacing:0;color:#c8c8c8;">117.0 ...</span>
<span class="t" style="left:1426px;top:606.0px;font-size:5.41px;line-height:10px;letter-spacing:0;color:#c8c8c8;">8.</span>
<div class="a" style="left:1368px;top:616.75px;width:6.5px;height:6.5px;background:#f4f4f4"></div>
<svg class="a" style="left:1378px;top:616.45px;" width="8" height="7" viewBox="0 0 8 7"><path d="M0 1.5L3 0L8 1L6.5 6.5L2 6.5Z" fill="#d89448"/><rect x="2.8" y="3.2" width="2.4" height="3" fill="#f4e4c8"/></svg>
<span class="t" style="left:1388px;top:614.95px;font-size:5.41px;line-height:10px;letter-spacing:0;color:#d8d8d8;">A...</span>
<span class="t" style="left:1401.5px;top:614.95px;font-size:5.41px;line-height:10px;letter-spacing:0;color:#c8c8c8;">2.0 KiB</span>
<span class="t" style="left:1426px;top:614.95px;font-size:5.41px;line-height:10px;letter-spacing:0;color:#c8c8c8;">4.</span>
<div class="a" style="left:1361px;top:618.95px;width:2px;height:2px;background:#6a6a6a"></div>
<div class="a" style="left:1368px;top:625.6999999999999px;width:6.5px;height:6.5px;background:#f4f4f4"></div>
<svg class="a" style="left:1378px;top:625.4px;" width="8" height="7" viewBox="0 0 8 7"><path d="M0 1.5L3 0L8 1L6.5 6.5L2 6.5Z" fill="#d89448"/><rect x="2.8" y="3.2" width="2.4" height="3" fill="#f4e4c8"/></svg>
<span class="t" style="left:1388px;top:623.9px;font-size:5.41px;line-height:10px;letter-spacing:0;color:#d8d8d8;">b...</span>
<span class="t" style="left:1401.5px;top:623.9px;font-size:5.41px;line-height:10px;letter-spacing:0;color:#c8c8c8;">2.0 KiB</span>
<span class="t" style="left:1426px;top:623.9px;font-size:5.41px;line-height:10px;letter-spacing:0;color:#c8c8c8;">6.</span>
<div class="a" style="left:1361px;top:627.9px;width:2px;height:2px;background:#6a6a6a"></div>
<div class="a" style="left:1368px;top:634.65px;width:6.5px;height:6.5px;background:#f4f4f4"></div>
<svg class="a" style="left:1378px;top:634.35px;" width="8" height="7" viewBox="0 0 8 7"><path d="M0 1.5L3 0L8 1L6.5 6.5L2 6.5Z" fill="#d89448"/><rect x="2.8" y="3.2" width="2.4" height="3" fill="#f4e4c8"/></svg>
<span class="t" style="left:1388px;top:632.85px;font-size:5.41px;line-height:10px;letter-spacing:0;color:#d8d8d8;">C...</span>
<span class="t" style="left:1401.5px;top:632.85px;font-size:5.41px;line-height:10px;letter-spacing:0;color:#c8c8c8;">2.0 KiB</span>
<span class="t" style="left:1426px;top:632.85px;font-size:5.41px;line-height:10px;letter-spacing:0;color:#c8c8c8;">6.</span>
<div class="a" style="left:1361px;top:636.85px;width:2px;height:2px;background:#6a6a6a"></div>
<div class="a" style="left:1368px;top:643.5999999999999px;width:6.5px;height:6.5px;background:#f4f4f4"></div>
<svg class="a" style="left:1378px;top:643.3px;" width="8" height="7" viewBox="0 0 8 7"><path d="M0 1.5L3 0L8 1L6.5 6.5L2 6.5Z" fill="#d89448"/><rect x="2.8" y="3.2" width="2.4" height="3" fill="#f4e4c8"/></svg>
<span class="t" style="left:1388px;top:641.8px;font-size:5.41px;line-height:10px;letter-spacing:0;color:#d8d8d8;">ca...</span>
<span class="t" style="left:1401.5px;top:641.8px;font-size:5.41px;line-height:10px;letter-spacing:0;color:#c8c8c8;">2.0 KiB</span>
<span class="t" style="left:1426px;top:641.8px;font-size:5.41px;line-height:10px;letter-spacing:0;color:#c8c8c8;">7.</span>
<div class="a" style="left:1361px;top:645.8px;width:2px;height:2px;background:#6a6a6a"></div>
<div class="a" style="left:1368px;top:652.55px;width:6.5px;height:6.5px;background:#f4f4f4"></div>
<svg class="a" style="left:1378px;top:652.25px;" width="8" height="7" viewBox="0 0 8 7"><path d="M0 1.5L3 0L8 1L6.5 6.5L2 6.5Z" fill="#d89448"/><rect x="2.8" y="3.2" width="2.4" height="3" fill="#f4e4c8"/></svg>
<span class="t" style="left:1388px;top:650.75px;font-size:5.41px;line-height:10px;letter-spacing:0;color:#d8d8d8;">co...</span>
<span class="t" style="left:1401.5px;top:650.75px;font-size:5.41px;line-height:10px;letter-spacing:0;color:#c8c8c8;">2.0 KiB</span>
<span class="t" style="left:1426px;top:650.75px;font-size:5.41px;line-height:10px;letter-spacing:0;color:#c8c8c8;">6.</span>
<div class="a" style="left:1361px;top:654.75px;width:2px;height:2px;background:#6a6a6a"></div>
<div class="a" style="left:1368px;top:661.5px;width:6.5px;height:6.5px;background:#f4f4f4"></div>
<svg class="a" style="left:1378px;top:661.2px;" width="8" height="7" viewBox="0 0 8 7"><path d="M0 1.5L3 0L8 1L6.5 6.5L2 6.5Z" fill="#d89448"/><rect x="2.8" y="3.2" width="2.4" height="3" fill="#f4e4c8"/></svg>
<span class="t" style="left:1388px;top:659.7px;font-size:5.41px;line-height:10px;letter-spacing:0;color:#d8d8d8;">co...</span>
<span class="t" style="left:1401.5px;top:659.7px;font-size:5.41px;line-height:10px;letter-spacing:0;color:#c8c8c8;">0 B</span>
<span class="t" style="left:1426px;top:659.7px;font-size:5.41px;line-height:10px;letter-spacing:0;color:#c8c8c8;">8.</span>
<div class="a" style="left:1361px;top:663.7px;width:2px;height:2px;background:#6a6a6a"></div>
<div class="a" style="left:1368px;top:670.4499999999999px;width:6.5px;height:6.5px;background:#f4f4f4"></div>
<svg class="a" style="left:1378px;top:670.15px;" width="8" height="7" viewBox="0 0 8 7"><path d="M0 1.5L3 0L8 1L6.5 6.5L2 6.5Z" fill="#d89448"/><rect x="2.8" y="3.2" width="2.4" height="3" fill="#f4e4c8"/></svg>
<span class="t" style="left:1388px;top:668.65px;font-size:5.41px;line-height:10px;letter-spacing:0;color:#d8d8d8;">D...</span>
<span class="t" style="left:1401.5px;top:668.65px;font-size:5.41px;line-height:10px;letter-spacing:0;color:#c8c8c8;">4.0 KiB</span>
<span class="t" style="left:1426px;top:668.65px;font-size:5.41px;line-height:10px;letter-spacing:0;color:#c8c8c8;">8.</span>
<div class="a" style="left:1361px;top:672.65px;width:2px;height:2px;background:#6a6a6a"></div>
<div class="a" style="left:1368px;top:679.4px;width:6.5px;height:6.5px;background:#f4f4f4"></div>
<svg class="a" style="left:1378px;top:679.1px;" width="8" height="7" viewBox="0 0 8 7"><path d="M0 1.5L3 0L8 1L6.5 6.5L2 6.5Z" fill="#d89448"/><rect x="2.8" y="3.2" width="2.4" height="3" fill="#f4e4c8"/></svg>
<span class="t" style="left:1388px;top:677.6px;font-size:5.41px;line-height:10px;letter-spacing:0;color:#d8d8d8;">d...</span>
<span class="t" style="left:1401.5px;top:677.6px;font-size:5.41px;line-height:10px;letter-spacing:0;color:#c8c8c8;">2.0 KiB</span>
<span class="t" style="left:1426px;top:677.6px;font-size:5.41px;line-height:10px;letter-spacing:0;color:#c8c8c8;">8.</span>
<div class="a" style="left:1361px;top:681.6px;width:2px;height:2px;background:#6a6a6a"></div>
<div class="a" style="left:1368px;top:688.3499999999999px;width:6.5px;height:6.5px;background:#f4f4f4"></div>
<svg class="a" style="left:1378px;top:688.05px;" width="8" height="7" viewBox="0 0 8 7"><path d="M0 1.5L3 0L8 1L6.5 6.5L2 6.5Z" fill="#d89448"/><rect x="2.8" y="3.2" width="2.4" height="3" fill="#f4e4c8"/></svg>
<span class="t" style="left:1388px;top:686.55px;font-size:5.41px;line-height:10px;letter-spacing:0;color:#d8d8d8;">d...</span>
<span class="t" style="left:1401.5px;top:686.55px;font-size:5.41px;line-height:10px;letter-spacing:0;color:#c8c8c8;">2.0 KiB</span>
<span class="t" style="left:1426px;top:686.55px;font-size:5.41px;line-height:10px;letter-spacing:0;color:#c8c8c8;">2.</span>
<div class="a" style="left:1361px;top:690.55px;width:2px;height:2px;background:#6a6a6a"></div>
<div class="a" style="left:1368px;top:697.3px;width:6.5px;height:6.5px;background:#f4f4f4"></div>
<svg class="a" style="left:1378px;top:697.0px;" width="8" height="7" viewBox="0 0 8 7"><path d="M0 1.5L3 0L8 1L6.5 6.5L2 6.5Z" fill="#d89448"/><rect x="2.8" y="3.2" width="2.4" height="3" fill="#f4e4c8"/></svg>
<span class="t" style="left:1388px;top:695.5px;font-size:5.41px;line-height:10px;letter-spacing:0;color:#d8d8d8;">D...</span>
<span class="t" style="left:1401.5px;top:695.5px;font-size:5.41px;line-height:10px;letter-spacing:0;color:#c8c8c8;">2.0 KiB</span>
<span class="t" style="left:1426px;top:695.5px;font-size:5.41px;line-height:10px;letter-spacing:0;color:#c8c8c8;">5.</span>
<div class="a" style="left:1361px;top:699.5px;width:2px;height:2px;background:#6a6a6a"></div>
<div class="a" style="left:1368px;top:706.25px;width:6.5px;height:6.5px;background:#f4f4f4"></div>
<svg class="a" style="left:1378px;top:705.95px;" width="8" height="7" viewBox="0 0 8 7"><path d="M0 1.5L3 0L8 1L6.5 6.5L2 6.5Z" fill="#d89448"/><rect x="2.8" y="3.2" width="2.4" height="3" fill="#f4e4c8"/></svg>
<span class="t" style="left:1388px;top:704.45px;font-size:5.41px;line-height:10px;letter-spacing:0;color:#d8d8d8;">D...</span>
<span class="t" style="left:1401.5px;top:704.45px;font-size:5.41px;line-height:10px;letter-spacing:0;color:#c8c8c8;">4.0 KiB</span>
<span class="t" style="left:1426px;top:704.45px;font-size:5.41px;line-height:10px;letter-spacing:0;color:#c8c8c8;">8.</span>
<div class="a" style="left:1361px;top:708.45px;width:2px;height:2px;background:#6a6a6a"></div>
<div class="a" style="left:1368px;top:715.1999999999999px;width:6.5px;height:6.5px;background:#f4f4f4"></div>
<svg class="a" style="left:1378px;top:714.9px;" width="8" height="7" viewBox="0 0 8 7"><path d="M0 1.5L3 0L8 1L6.5 6.5L2 6.5Z" fill="#d89448"/><rect x="2.8" y="3.2" width="2.4" height="3" fill="#f4e4c8"/></svg>
<span class="t" style="left:1388px;top:713.4px;font-size:5.41px;line-height:10px;letter-spacing:0;color:#d8d8d8;">fp...</span>
<span class="t" style="left:1401.5px;top:713.4px;font-size:5.41px;line-height:10px;letter-spacing:0;color:#c8c8c8;">2.0 KiB</span>
<span class="t" style="left:1426px;top:713.4px;font-size:5.41px;line-height:10px;letter-spacing:0;color:#c8c8c8;">5.</span>
<div class="a" style="left:1361px;top:717.4px;width:2px;height:2px;background:#6a6a6a"></div>
<div class="a" style="left:1368px;top:724.15px;width:6.5px;height:6.5px;background:#f4f4f4"></div>
<svg class="a" style="left:1378px;top:723.85px;" width="8" height="7" viewBox="0 0 8 7"><path d="M0 1.5L3 0L8 1L6.5 6.5L2 6.5Z" fill="#d89448"/><rect x="2.8" y="3.2" width="2.4" height="3" fill="#f4e4c8"/></svg>
<span class="t" style="left:1388px;top:722.35px;font-size:5.41px;line-height:10px;letter-spacing:0;color:#d8d8d8;">h...</span>
<span class="t" style="left:1401.5px;top:722.35px;font-size:5.41px;line-height:10px;letter-spacing:0;color:#c8c8c8;">2.0 KiB</span>
<span class="t" style="left:1426px;top:722.35px;font-size:5.41px;line-height:10px;letter-spacing:0;color:#c8c8c8;">2.</span>
<div class="a" style="left:1361px;top:726.35px;width:2px;height:2px;background:#6a6a6a"></div>
<div class="a" style="left:1368px;top:733.0999999999999px;width:6.5px;height:6.5px;background:#f4f4f4"></div>
<svg class="a" style="left:1378px;top:732.8px;" width="8" height="7" viewBox="0 0 8 7"><path d="M0 1.5L3 0L8 1L6.5 6.5L2 6.5Z" fill="#d89448"/><rect x="2.8" y="3.2" width="2.4" height="3" fill="#f4e4c8"/></svg>
<span class="t" style="left:1388px;top:731.3px;font-size:5.41px;line-height:10px;letter-spacing:0;color:#d8d8d8;">l...</span>
<span class="t" style="left:1401.5px;top:731.3px;font-size:5.41px;line-height:10px;letter-spacing:0;color:#c8c8c8;">2.0 KiB</span>
<span class="t" style="left:1426px;top:731.3px;font-size:5.41px;line-height:10px;letter-spacing:0;color:#c8c8c8;">8.</span>
<div class="a" style="left:1361px;top:735.3px;width:2px;height:2px;background:#6a6a6a"></div>
<div class="a" style="left:1368px;top:742.05px;width:6.5px;height:6.5px;background:#f4f4f4"></div>
<svg class="a" style="left:1378px;top:741.75px;" width="8" height="7" viewBox="0 0 8 7"><path d="M0 1.5L3 0L8 1L6.5 6.5L2 6.5Z" fill="#d89448"/><rect x="2.8" y="3.2" width="2.4" height="3" fill="#f4e4c8"/></svg>
<span class="t" style="left:1388px;top:740.25px;font-size:5.41px;line-height:10px;letter-spacing:0;color:#d8d8d8;">m...</span>
<span class="t" style="left:1401.5px;top:740.25px;font-size:5.41px;line-height:10px;letter-spacing:0;color:#c8c8c8;">2.0 KiB</span>
<span class="t" style="left:1426px;top:740.25px;font-size:5.41px;line-height:10px;letter-spacing:0;color:#c8c8c8;">3.</span>
<div class="a" style="left:1361px;top:744.25px;width:2px;height:2px;background:#6a6a6a"></div>
<div class="a" style="left:1368px;top:751.0px;width:6.5px;height:6.5px;background:#f4f4f4"></div>
<svg class="a" style="left:1378px;top:750.7px;" width="8" height="7" viewBox="0 0 8 7"><path d="M0 1.5L3 0L8 1L6.5 6.5L2 6.5Z" fill="#d89448"/><rect x="2.8" y="3.2" width="2.4" height="3" fill="#f4e4c8"/></svg>
<span class="t" style="left:1388px;top:749.2px;font-size:5.41px;line-height:10px;letter-spacing:0;color:#d8d8d8;">n...</span>
<span class="t" style="left:1401.5px;top:749.2px;font-size:5.41px;line-height:10px;letter-spacing:0;color:#c8c8c8;">4.0 KiB</span>
<span class="t" style="left:1426px;top:749.2px;font-size:5.41px;line-height:10px;letter-spacing:0;color:#c8c8c8;">7.</span>
<div class="a" style="left:1361px;top:753.2px;width:2px;height:2px;background:#6a6a6a"></div>
<div class="a" style="left:1368px;top:759.9499999999999px;width:6.5px;height:6.5px;background:#f4f4f4"></div>
<svg class="a" style="left:1378px;top:759.65px;" width="8" height="7" viewBox="0 0 8 7"><path d="M0 1.5L3 0L8 1L6.5 6.5L2 6.5Z" fill="#d89448"/><rect x="2.8" y="3.2" width="2.4" height="3" fill="#f4e4c8"/></svg>
<span class="t" style="left:1388px;top:758.15px;font-size:5.41px;line-height:10px;letter-spacing:0;color:#d8d8d8;">n...</span>
<span class="t" style="left:1401.5px;top:758.15px;font-size:5.41px;line-height:10px;letter-spacing:0;color:#c8c8c8;">2.0 KiB</span>
<span class="t" style="left:1426px;top:758.15px;font-size:5.41px;line-height:10px;letter-spacing:0;color:#c8c8c8;">7.</span>
<div class="a" style="left:1361px;top:762.15px;width:2px;height:2px;background:#6a6a6a"></div>
<div class="a" style="left:1368px;top:768.9px;width:6.5px;height:6.5px;background:#f4f4f4"></div>
<svg class="a" style="left:1378px;top:768.6px;" width="8" height="7" viewBox="0 0 8 7"><path d="M0 1.5L3 0L8 1L6.5 6.5L2 6.5Z" fill="#d89448"/><rect x="2.8" y="3.2" width="2.4" height="3" fill="#f4e4c8"/></svg>
<span class="t" style="left:1388px;top:767.1px;font-size:5.41px;line-height:10px;letter-spacing:0;color:#d8d8d8;">N...</span>
<span class="t" style="left:1401.5px;top:767.1px;font-size:5.41px;line-height:10px;letter-spacing:0;color:#c8c8c8;">2.0 KiB</span>
<span class="t" style="left:1426px;top:767.1px;font-size:5.41px;line-height:10px;letter-spacing:0;color:#c8c8c8;">2.</span>
<div class="a" style="left:1361px;top:771.1px;width:2px;height:2px;background:#6a6a6a"></div>
<div class="a" style="left:1368px;top:777.8499999999999px;width:6.5px;height:6.5px;background:#f4f4f4"></div>
<svg class="a" style="left:1378px;top:777.55px;" width="8" height="7" viewBox="0 0 8 7"><path d="M0 1.5L3 0L8 1L6.5 6.5L2 6.5Z" fill="#d89448"/><rect x="2.8" y="3.2" width="2.4" height="3" fill="#f4e4c8"/></svg>
<span class="t" style="left:1388px;top:776.05px;font-size:5.41px;line-height:10px;letter-spacing:0;color:#d8d8d8;">p...</span>
<span class="t" style="left:1401.5px;top:776.05px;font-size:5.41px;line-height:10px;letter-spacing:0;color:#c8c8c8;">2.0 KiB</span>
<span class="t" style="left:1426px;top:776.05px;font-size:5.41px;line-height:10px;letter-spacing:0;color:#c8c8c8;">2.</span>
<div class="a" style="left:1361px;top:780.05px;width:2px;height:2px;background:#6a6a6a"></div>
<div class="a" style="left:1368px;top:786.8px;width:6.5px;height:6.5px;background:#f4f4f4"></div>
<svg class="a" style="left:1378px;top:786.5px;" width="8" height="7" viewBox="0 0 8 7"><path d="M0 1.5L3 0L8 1L6.5 6.5L2 6.5Z" fill="#d89448"/><rect x="2.8" y="3.2" width="2.4" height="3" fill="#f4e4c8"/></svg>
<span class="t" style="left:1388px;top:785.0px;font-size:5.41px;line-height:10px;letter-spacing:0;color:#d8d8d8;">Pr...</span>
<span class="t" style="left:1401.5px;top:785.0px;font-size:5.41px;line-height:10px;letter-spacing:0;color:#c8c8c8;">2.0 KiB</span>
<span class="t" style="left:1426px;top:785.0px;font-size:5.41px;line-height:10px;letter-spacing:0;color:#c8c8c8;">2.</span>
<div class="a" style="left:1361px;top:789.0px;width:2px;height:2px;background:#6a6a6a"></div>
<div class="a" style="left:1368px;top:795.75px;width:6.5px;height:6.5px;background:#f4f4f4"></div>
<svg class="a" style="left:1378px;top:795.45px;" width="8" height="7" viewBox="0 0 8 7"><path d="M0 1.5L3 0L8 1L6.5 6.5L2 6.5Z" fill="#d89448"/><rect x="2.8" y="3.2" width="2.4" height="3" fill="#f4e4c8"/></svg>
<span class="t" style="left:1388px;top:793.95px;font-size:5.41px;line-height:10px;letter-spacing:0;color:#d8d8d8;">q...</span>
<span class="t" style="left:1401.5px;top:793.95px;font-size:5.41px;line-height:10px;letter-spacing:0;color:#c8c8c8;">8.0 KiB</span>
<span class="t" style="left:1426px;top:793.95px;font-size:5.41px;line-height:10px;letter-spacing:0;color:#c8c8c8;">8.</span>
<div class="a" style="left:1361px;top:797.95px;width:2px;height:2px;background:#6a6a6a"></div>
<div class="a" style="left:1431px;top:598px;width:7px;height:207px;background:#1a1a1a;border-left:1px solid #444"></div>
<div class="a" style="left:1432px;top:598px;width:6px;height:7px;background:#d8d8d8"></div>
<div class="a" style="left:1432px;top:606px;width:5px;height:14px;background:linear-gradient(90deg,#9a9a9a,#5a5a5a)"></div>
<div class="a" style="left:1432px;top:797px;width:6px;height:7px;background:#d8d8d8"></div>
<div class="a" style="left:1338px;top:805px;width:94px;height:7px;background:#2a2a2a"></div>
<div class="a" style="left:1338px;top:805px;width:7px;height:7px;background:#d0d0d0"></div>
<div class="a" style="left:1345px;top:805px;width:51px;height:7px;background:linear-gradient(#8a8a8a,#4a4a4a)"></div>
<div class="a" style="left:1424px;top:805px;width:7px;height:7px;background:#d0d0d0"></div>
<div class="a" style="left:1441px;top:598px;width:1px;height:210px;background:repeating-linear-gradient(#3a3a3a 0 1px,#000 1px 3px)"></div>
<div class="a" style="left:1448px;top:603px;width:10px;height:23px;background:linear-gradient(#8a8a8a,#3a3a3a);border:1px solid #666"></div>
<span class="t" style="left:1447px;top:629px;font-size:4.92px;line-height:10px;letter-spacing:0;color:#b8b8b8;">Nex</span>
<span class="t" style="left:1452px;top:642px;font-size:4.92px;line-height:10px;letter-spacing:0;color:#b8b8b8;">Ta</span>
<span class="t" style="left:1452px;top:693px;font-size:4.92px;line-height:10px;letter-spacing:0;color:#b8b8b8;">To</span>
<span class="t" style="left:1447px;top:772px;font-size:4.92px;line-height:10px;letter-spacing:0;color:#b8b8b8;">Wor</span>
<div class="a" style="left:1448px;top:649px;width:1px;height:40px;background:#333"></div>
<div class="a" style="left:1448px;top:700px;width:1px;height:22px;background:#333"></div>
<div class="a" style="left:1448px;top:770px;width:10px;height:1px;background:#444"></div>
<div class="a" style="left:1448px;top:806px;width:10px;height:1px;background:#444"></div>
<div class="a" style="left:1458px;top:586px;width:50px;height:12px;background:linear-gradient(#b0b0b0,#7a7a7a 55%,#5e5e5e);border:1px solid #8a8a8a;border-bottom:none"></div>
<div class="a" style="left:1460px;top:589px;width:7px;height:7px;background:#8a8a8a;border:1px solid #c0c0c0"></div>
<div class="a" style="left:1497px;top:589px;width:4px;height:4px;border:1px solid #a8a8a8"></div>
<div class="a" style="left:1499px;top:591px;width:5px;height:5px;border:1px solid #a8a8a8"></div>
<span class="t" style="left:1475px;top:587px;font-size:5.82px;line-height:10px;letter-spacing:0;color:#e4e4e4;font-weight:bold">Kolf</span>
<div class="a" style="left:1508px;top:586px;width:104px;height:12px;background:linear-gradient(#2a2a2a,#0a0a0a)"></div>
<div class="a" style="left:1458px;top:597px;width:202px;height:236px;background:#000;border:1px solid #9a9a9a"></div>
<div class="a" style="left:1459px;top:598px;width:200px;height:12px;background:linear-gradient(#3a3a3a,#0a0a0a 60%,#000);border-bottom:1px solid #2a2a2a"></div>
<span class="t" style="left:1463px;top:599px;font-size:6.15px;line-height:10px;letter-spacing:0;color:#c8c8c8;">Game</span>
<span class="t" style="left:1486px;top:599px;font-size:6.15px;line-height:10px;letter-spacing:0;color:#c8c8c8;">Hole</span>
<span class="t" style="left:1506px;top:599px;font-size:6.15px;line-height:10px;letter-spacing:0;color:#c8c8c8;">Go</span>
<span class="t" style="left:1521px;top:599px;font-size:6.15px;line-height:10px;letter-spacing:0;color:#c8c8c8;">Settings</span>
<span class="t" style="left:1550px;top:599px;font-size:6.15px;line-height:10px;letter-spacing:0;color:#c8c8c8;">Help</span>
<div class="a" style="left:1464px;top:613px;width:6px;height:8px;background:#f0f0ff;border:1px solid #6060c0"></div>
<span class="t" style="left:1474px;top:613px;font-size:5.58px;line-height:10px;letter-spacing:0;color:#d0d0d0;">New</span>
<div class="a" style="left:1497px;top:613px;width:8px;height:8px;background:#8a8a8a;border:1px solid #555"></div>
<span class="t" style="left:1507px;top:613px;font-size:5.58px;line-height:10px;letter-spacing:0;color:#5a5a5a;">Save Course</span>
<svg class="a" style="left:1553px;top:612px;" width="10" height="10" viewBox="0 0 10 10"><path d="M2 5A3.3 3.3 0 1 0 5 2" fill="none" stroke="#7a7a7a" stroke-width="1.8"/><path d="M5.5 0V4.5L2.5 2Z" fill="#7a7a7a"/></svg>
<span class="t" style="left:1565px;top:613px;font-size:5.58px;line-height:10px;letter-spacing:0;color:#5a5a5a;">Undo Shot</span>
<div class="a" style="left:1462px;top:629px;width:190px;height:189px;background:radial-gradient(ellipse 45px 32px at 22% 42%,#3a963c 0,rgba(58,150,60,0) 100%),radial-gradient(ellipse 70px 50px at 66% 74%,#90d25c 0,rgba(144,210,92,0) 100%),radial-gradient(ellipse 36px 26px at 82% 4%,#c6da6c 0,rgba(198,218,108,0) 100%),#72b852"></div>
<div class="a" style="left:1462px;top:654px;width:190px;height:43px;background:radial-gradient(ellipse 50px 30px at 26% 55%,rgba(34,100,58,.95) 0,rgba(34,100,58,0) 100%),rgba(78,122,72,.82)"></div>
<div class="a" style="left:1463px;top:630px;width:2px;height:17px;background:#7a9a20"></div>
<div class="a" style="left:1462px;top:768px;width:124px;height:48px;background:radial-gradient(ellipse 40px 6px at 35% 35%,rgba(225,235,242,.9) 0,rgba(225,235,242,0) 100%),radial-gradient(ellipse 30px 5px at 70% 22%,rgba(30,60,110,.7) 0,rgba(30,60,110,0) 100%),linear-gradient(#3a78b0,#4a90c0 60%,#62a8c8);border-radius:0 14px 22px 6px"></div>
<div class="a" style="left:1462px;top:804px;width:70px;height:14px;background:linear-gradient(90deg,#5aa2c6,#6ab08a)"></div>
<div class="a" style="left:1500px;top:806px;width:95px;height:12px;background:#73b352;border-radius:50% 60% 0 0"></div>
<div class="a" style="left:1462px;top:752px;width:136px;height:21px;background:repeating-linear-gradient(0deg,#8a6a2c 0 1.5px,#a07c36 1.5px 3px,#74581f 3px 4px);border:1px solid #4a3410"></div>
<div class="a" style="left:1488px;top:754px;width:26px;height:17px;background:radial-gradient(ellipse,#6fb94f 40%,rgba(111,185,79,0) 75%)"></div>
<div class="a" style="left:1538px;top:754px;width:28px;height:17px;background:radial-gradient(ellipse,#6fb94f 40%,rgba(111,185,79,0) 75%)"></div>
<div class="a" style="left:1580px;top:758px;width:8px;height:8px;background:#3a4a3a;border-radius:50%;border:1px solid #2a6a2a"></div>
<div class="a" style="left:1473px;top:788px;width:110px;height:18px;background:repeating-linear-gradient(0deg,#8a6a2c 0 1.5px,#a07c36 1.5px 3px,#74581f 3px 4px);border:1px solid #4a3410"></div>
<div class="a" style="left:1481px;top:793px;width:8px;height:8px;background:#4a4a4a;border-radius:50%;border:1px solid #e02060"></div>
<div class="a" style="left:1640px;top:759px;width:3px;height:3px;background:#f0e040;border-radius:50%"></div>
<svg class="a" style="left:1462px;top:629px" width="150" height="189" viewBox="1462 629 150 189"><polygon points="1504.7,676.3 1517.0,691.0 1516.1,693.2 1520.9,697.9 1515.9,703.8 1510.4,699.9 1504.7,702.8 1504.8,709.6 1497.1,710.3 1496.0,703.6 1489.8,701.7 1485.1,706.5 1479.2,701.5 1483.1,696.0 1480.2,690.3 1473.4,690.4 1472.7,682.7 1479.4,681.6 1481.3,675.4 1476.5,670.7 1481.5,664.8 1487.0,668.7 1491.4,666.2" fill="#eef2ec" stroke="#5cb84a" stroke-width="1.2"/><circle cx="1498.7" cy="684.3" r="14.6" fill="#2c6c3c"/><circle cx="1498.7" cy="684.3" r="13" fill="none" stroke="#3fa04a" stroke-width=".8"/><circle cx="1521.9" cy="698.1" r="3.1" fill="#3c4248" stroke="#2aa8b8" stroke-width="1"/><path d="M1495 660H1504.3V673.2L1517.3 660L1526 662.5L1513.5 676.3L1526 689.8L1518.2 692L1504.3 678.6V691L1495 692Z" fill="#f0f2ee"/><ellipse cx="1547.4" cy="676.4" rx="14.8" ry="14.4" fill="none" stroke="#f0f2ee" stroke-width="4.6"/><circle cx="1549.7" cy="675.6" r="7" fill="#dcdcdc"/><circle cx="1548" cy="673.5" r="3.6" fill="#fafafa"/><path d="M1549.7 682V687.5" stroke="#e4e4e4" stroke-width="1.6"/><path d="M1572.8 660H1581V685H1605V692H1572.8Z" fill="#f0f2ee"/><path d="M1601 660H1620V665.2H1606.2V675H1618V678.2H1606.2V692H1601Z" fill="#f0f2ee"/><path d="M1559.9 651.9L1586.4 691" stroke="#6a6a6a" stroke-width="2.2"/><path d="M1559.9 651.9L1586.4 691" stroke="#e8e8e8" stroke-width="1.2"/><path d="M1585.8 691.2L1587.6 688.9L1600.6 680.5L1607 680.5L1607.5 685L1605 689.8L1587.6 692.2Z" fill="#e6e6e6" stroke="#8a8a8a" stroke-width=".7"/></svg>
<div class="a" style="left:1612px;top:450px;width:55px;height:12px;background:linear-gradient(#ffe04a,#f5be00);border:1px solid #a88a10;border-bottom:none"></div>
<div class="a" style="left:1614px;top:453px;width:7px;height:7px;background:#fff0a0;border:1px solid #8a7010"></div>
<span class="t" style="left:1630px;top:451px;font-size:5.82px;line-height:10px;letter-spacing:0;color:#101010;font-weight:bold">Kollision</span>
<div class="a" style="left:1667px;top:450px;width:185px;height:12px;background:#000"></div>
<div class="a" style="left:1668px;top:451px;width:6px;height:4px;background:#8a8a8a"></div>
<div class="a" style="left:1668px;top:456px;width:6px;height:4px;background:#8a8a8a"></div>
<div class="a" style="left:1676px;top:451px;width:7px;height:4px;background:#8a8a8a"></div>
<div class="a" style="left:1676px;top:456px;width:7px;height:4px;background:#8a8a8a"></div>
<div class="a" style="left:1689px;top:451px;width:2px;height:2px;background:#ccc"></div>
<div class="a" style="left:1721px;top:451px;width:1px;height:11px;background:#e8e8e8"></div>
<div class="a" style="left:1750px;top:451px;width:1px;height:11px;background:#e8e8e8"></div>
<div class="a" style="left:1779px;top:451px;width:1px;height:11px;background:#e8e8e8"></div>
<div class="a" style="left:1808px;top:451px;width:1px;height:11px;background:#e8e8e8"></div>
<div class="a" style="left:1612px;top:461px;width:240px;height:264px;background:#000;border:1px solid #9a9a9a"></div>
<div class="a" style="left:1613px;top:462px;width:238px;height:12px;background:linear-gradient(#3a3a3a,#0a0a0a 60%,#000);border-bottom:1px solid #2a2a2a"></div>
<span class="t" style="left:1617px;top:463px;font-size:6.15px;line-height:10px;letter-spacing:0;color:#c8c8c8;">Game</span>
<span class="t" style="left:1641px;top:463px;font-size:6.15px;line-height:10px;letter-spacing:0;color:#c8c8c8;">Settings</span>
<span class="t" style="left:1670px;top:463px;font-size:6.15px;line-height:10px;letter-spacing:0;color:#c8c8c8;">Help</span>
<div class="a" style="left:1702px;top:511px;width:14px;height:14px;border-radius:50%;background:radial-gradient(circle at 38% 32%,#ff7a6a,#e00808 70%)"></div>
<div class="a" style="left:1701px;top:575px;width:14px;height:14px;border-radius:50%;background:radial-gradient(circle at 38% 32%,#6a7aff,#0818e0 70%)"></div>
<div class="a" style="left:1628px;top:606px;width:14px;height:14px;border-radius:50%;background:radial-gradient(circle at 38% 32%,#ff7a6a,#e00808 70%)"></div>
<div class="a" style="left:1801px;top:613px;width:14px;height:14px;border-radius:50%;background:radial-gradient(circle at 38% 32%,#ff7a6a,#e00808 70%)"></div>
<div class="a" style="left:1815px;top:634px;width:14px;height:14px;border-radius:50%;background:radial-gradient(circle at 38% 32%,#ff7a6a,#e00808 70%)"></div>
<span class="t" style="left:1615px;top:712px;font-size:5.58px;line-height:10px;letter-spacing:0;color:#c8c8c8;">Balls: 4</span>
<div class="a" style="left:1752px;top:712px;width:36px;height:10px;background:linear-gradient(#5a5a5a,#2a2a2a);border:1px solid #6a6a6a"></div>
<div class="a" style="left:1757px;top:716px;width:1.5px;height:4px;background:#e03030"></div>
<div class="a" style="left:1759px;top:714px;width:1.5px;height:6px;background:#30a0e0"></div>
<div class="a" style="left:1761px;top:717px;width:1.5px;height:3px;background:#30c030"></div>
<span class="t" style="left:1766px;top:712px;font-size:6.15px;line-height:10px;letter-spacing:0;color:#a8a8a8;">Easy</span>
<div class="a" style="left:1790px;top:712px;width:5px;height:10px;background:#3a3a3a;border:1px solid #6a6a6a"></div>
<span class="t" style="left:1798px;top:712px;font-size:5.58px;line-height:10px;letter-spacing:0;color:#c8c8c8;">Time: 3 seconds</span>
<div class="a" style="left:1852px;top:450px;width:64px;height:276px;background:linear-gradient(#0a0e14 58%,#1c2836 70%,#1f2c3c)"></div>
<div class="a" style="left:1841px;top:450px;width:75px;height:12px;background:linear-gradient(#8a8a8a,#4a4a4a)"></div>
<svg class="a" style="left:1862px;top:450px;" width="34" height="12" viewBox="0 0 34 12"><path d="M1 8Q8 12 14 9Q20 2 33 1Q30 6 26 9Q20 12 12 12Z" fill="#1a80e0"/></svg>
<div class="a" style="left:1852px;top:462px;width:64px;height:20px;background:#0a0a0a"></div>
<div class="a" style="left:1852px;top:463px;width:9px;height:7px;background:#3a3a5a"></div>
<div class="a" style="left:1866px;top:465px;width:6px;height:3px;background:#4ac82a"></div>
<span class="t" style="left:1876px;top:462px;font-size:5.74px;line-height:10px;letter-spacing:0;color:#c8c8c8;">Mon 5:30 PM</span>
<div class="a" style="left:1855px;top:473px;width:2px;height:2px;background:#2ac8c8"></div>
<div class="a" style="left:1858px;top:476px;width:3px;height:3px;background:#8a8a8a"></div>
<div class="a" style="left:1852px;top:481.0px;width:64px;height:9.87px;background:linear-gradient(#4a4a4a,#161616);border-bottom:1px solid #000"></div>
<span class="t" style="left:1856px;top:481.0px;font-size:5.90px;line-height:10px;letter-spacing:0;color:#d0d0d0;">Tracker</span>
<svg class="a" style="left:1911px;top:484.0px;" width="3" height="5" viewBox="0 0 3 5"><path d="M0 0L3 2.5L0 5Z" fill="#aaa"/></svg>
<div class="a" style="left:1852px;top:490.87px;width:64px;height:9.87px;background:linear-gradient(#4a4a4a,#161616);border-bottom:1px solid #000"></div>
<span class="t" style="left:1856px;top:490.87px;font-size:5.90px;line-height:10px;letter-spacing:0;color:#d0d0d0;">NeoChat</span>
<svg class="a" style="left:1911px;top:493.87px;" width="3" height="5" viewBox="0 0 3 5"><path d="M0 0L3 2.5L0 5Z" fill="#aaa"/></svg>
<div class="a" style="left:1852px;top:500.74px;width:64px;height:9.87px;background:linear-gradient(#4a4a4a,#161616);border-bottom:1px solid #000"></div>
<span class="t" style="left:1856px;top:500.74px;font-size:5.90px;line-height:10px;letter-spacing:0;color:#d0d0d0;">WebPositive</span>
<svg class="a" style="left:1911px;top:503.74px;" width="3" height="5" viewBox="0 0 3 5"><path d="M0 0L3 2.5L0 5Z" fill="#aaa"/></svg>
<div class="a" style="left:1852px;top:510.61px;width:64px;height:9.87px;background:linear-gradient(#4a4a4a,#161616);border-bottom:1px solid #000"></div>
<span class="t" style="left:1856px;top:510.61px;font-size:5.90px;line-height:10px;letter-spacing:0;color:#d0d0d0;">Kalm</span>
<svg class="a" style="left:1911px;top:513.61px;" width="3" height="5" viewBox="0 0 3 5"><path d="M0 0L3 2.5L0 5Z" fill="#aaa"/></svg>
<div class="a" style="left:1852px;top:520.48px;width:64px;height:9.87px;background:linear-gradient(#4a4a4a,#161616);border-bottom:1px solid #000"></div>
<span class="t" style="left:1856px;top:520.48px;font-size:5.90px;line-height:10px;letter-spacing:0;color:#d0d0d0;">Kanagram</span>
<svg class="a" style="left:1911px;top:523.48px;" width="3" height="5" viewBox="0 0 3 5"><path d="M0 0L3 2.5L0 5Z" fill="#aaa"/></svg>
<div class="a" style="left:1852px;top:530.35px;width:64px;height:9.87px;background:linear-gradient(#4a4a4a,#161616);border-bottom:1px solid #000"></div>
<span class="t" style="left:1856px;top:530.35px;font-size:5.90px;line-height:10px;letter-spacing:0;color:#d0d0d0;">KBackup</span>
<svg class="a" style="left:1911px;top:533.35px;" width="3" height="5" viewBox="0 0 3 5"><path d="M0 0L3 2.5L0 5Z" fill="#aaa"/></svg>
<div class="a" style="left:1852px;top:540.22px;width:64px;height:9.87px;background:linear-gradient(#4a4a4a,#161616);border-bottom:1px solid #000"></div>
<span class="t" style="left:1856px;top:540.22px;font-size:5.90px;line-height:10px;letter-spacing:0;color:#d0d0d0;">Kiriki</span>
<svg class="a" style="left:1911px;top:543.22px;" width="3" height="5" viewBox="0 0 3 5"><path d="M0 0L3 2.5L0 5Z" fill="#aaa"/></svg>
<div class="a" style="left:1852px;top:550.09px;width:64px;height:9.87px;background:linear-gradient(#4a4a4a,#161616);border-bottom:1px solid #000"></div>
<span class="t" style="left:1856px;top:550.09px;font-size:5.90px;line-height:10px;letter-spacing:0;color:#d0d0d0;">Kolf</span>
<svg class="a" style="left:1911px;top:553.09px;" width="3" height="5" viewBox="0 0 3 5"><path d="M0 0L3 2.5L0 5Z" fill="#aaa"/></svg>
<div class="a" style="left:1852px;top:559.96px;width:64px;height:9.87px;background:linear-gradient(#4a4a4a,#161616);border-bottom:1px solid #000"></div>
<span class="t" style="left:1856px;top:559.96px;font-size:5.90px;line-height:10px;letter-spacing:0;color:#d0d0d0;">Kollision</span>
<svg class="a" style="left:1911px;top:562.96px;" width="3" height="5" viewBox="0 0 3 5"><path d="M0 0L3 2.5L0 5Z" fill="#aaa"/></svg>
<div class="a" style="left:1852px;top:569.83px;width:64px;height:9.87px;background:linear-gradient(#4a4a4a,#161616);border-bottom:1px solid #000"></div>
<span class="t" style="left:1856px;top:569.83px;font-size:5.90px;line-height:10px;letter-spacing:0;color:#d0d0d0;">KSnakeDuel</span>
<svg class="a" style="left:1911px;top:572.83px;" width="3" height="5" viewBox="0 0 3 5"><path d="M0 0L3 2.5L0 5Z" fill="#aaa"/></svg>
<div class="a" style="left:1852px;top:579.7px;width:64px;height:9.87px;background:linear-gradient(#4a4a4a,#161616);border-bottom:1px solid #000"></div>
<span class="t" style="left:1856px;top:579.7px;font-size:5.90px;line-height:10px;letter-spacing:0;color:#d0d0d0;">KTrip</span>
<svg class="a" style="left:1911px;top:582.7px;" width="3" height="5" viewBox="0 0 3 5"><path d="M0 0L3 2.5L0 5Z" fill="#aaa"/></svg>
<div class="a" style="left:1852px;top:589.5699999999999px;width:64px;height:9.87px;background:linear-gradient(#4a4a4a,#161616);border-bottom:1px solid #000"></div>
<span class="t" style="left:1856px;top:589.5699999999999px;font-size:5.90px;line-height:10px;letter-spacing:0;color:#d0d0d0;">MassifVisualizer</span>
<svg class="a" style="left:1911px;top:592.5699999999999px;" width="3" height="5" viewBox="0 0 3 5"><path d="M0 0L3 2.5L0 5Z" fill="#aaa"/></svg>
<div class="a" style="left:1852px;top:599.44px;width:64px;height:9.87px;background:linear-gradient(#4a4a4a,#161616);border-bottom:1px solid #000"></div>
<span class="t" style="left:1856px;top:599.44px;font-size:5.90px;line-height:10px;letter-spacing:0;color:#d0d0d0;">Rocks</span>
<svg class="a" style="left:1911px;top:602.44px;" width="3" height="5" viewBox="0 0 3 5"><path d="M0 0L3 2.5L0 5Z" fill="#aaa"/></svg>
<div class="a" style="left:1012px;top:956px;width:904px;height:1px;background:#808080"></div>
<div class="a" style="left:1019px;top:685px;width:36px;height:36px;background:radial-gradient(circle at 50% 40%,#fff 60%,#ececec);border-radius:50%;box-shadow:0 0 3px rgba(0,0,0,.45)"></div>
<svg class="a" style="left:1027px;top:693px;" width="20" height="20" viewBox="0 0 20 20"><g ><path d="M1.5 10L10 2L10 6.5L18.5 6.5L18.5 13.5L10 13.5L10 18Z" fill="#35c033" stroke="#167a1a" stroke-width="1.4" stroke-linejoin="round"/><path d="M4 10L9 5.6L9 7.8L17 7.8" fill="none" stroke="#9cf08a" stroke-width="1"/></g></svg>
<div class="a" style="left:1870px;top:685px;width:36px;height:36px;background:radial-gradient(circle at 50% 40%,#fff 60%,#ececec);border-radius:50%;box-shadow:0 0 3px rgba(0,0,0,.45)"></div>
<svg class="a" style="left:1878px;top:693px;" width="20" height="20" viewBox="0 0 20 20"><g transform="translate(20,0) scale(-1,1)"><path d="M1.5 10L10 2L10 6.5L18.5 6.5L18.5 13.5L10 13.5L10 18Z" fill="#35c033" stroke="#167a1a" stroke-width="1.4" stroke-linejoin="round"/><path d="M4 10L9 5.6L9 7.8L17 7.8" fill="none" stroke="#9cf08a" stroke-width="1"/></g></svg>
</div></div>
<div class="a" style="left:1011px;top:988px;width:904px;height:87px;background:#2a2e32;border-top:1px solid #3a3e42"></div>
<div class="a" style="left:1019px;top:995px;width:72px;height:72px;background:rgba(61,174,233,.25);border:1px solid #3daee9;border-radius:2px"></div>
<div class="a w" style="left:1011px;top:988px;width:904px;height:87px"><div class="a" style="left:-1011px;top:-988px;width:1920px;height:1080px">
<div class="a" style="left:1023px;top:999px;width:64px;height:64px;background:#31609a;overflow:hidden"><div class="a" style="left:0px;top:0px;width:64px;height:3px;background:#dfe6ee"></div><div class="a" style="left:28px;top:3px;width:36px;height:15px;background:#fff"></div><div class="a" style="left:0px;top:14px;width:24px;height:20px;background:#fff"></div><div class="a" style="left:2px;top:16px;width:20px;height:16px;background:repeating-linear-gradient(#fff 0 2px,#bbb 2px 3px)"></div><div class="a" style="left:0px;top:47px;width:28px;height:17px;background:#fff"></div><div class="a" style="left:28px;top:20px;width:36px;height:32px;background:#31609a"></div><div class="a" style="left:40px;top:28px;width:22px;height:24px;background:#d8d8d8"></div><div class="a" style="left:42px;top:30px;width:8px;height:8px;background:#f0a030"></div><div class="a" style="left:52px;top:32px;width:9px;height:16px;background:repeating-linear-gradient(#fff 0 2px,#aac 2px 3px)"></div><div class="a" style="left:2px;top:54px;width:18px;height:1px;background:#c55"></div><div class="a" style="left:28px;top:18px;width:36px;height:1px;background:#4a7ab0"></div><div class="a" style="left:28px;top:18px;width:1px;height:46px;background:#4a7ab0"></div><div class="a" style="left:43px;top:3px;width:1px;height:15px;background:#889"></div></div>
<div class="a" style="left:1103px;top:999px;width:64px;height:64px;background:#fff;overflow:hidden"><div class="a" style="left:0px;top:0px;width:20px;height:2px;background:#f5c400"></div><div class="a" style="left:0px;top:2px;width:24px;height:62px;background:#fff"></div><div class="a" style="left:24px;top:2px;width:40px;height:62px;background:#ececee"></div><div class="a" style="left:3px;top:6px;width:10px;height:50px;background:repeating-linear-gradient(#fff 0 4px,#ddd 4px 5px)"></div><div class="a" style="left:43px;top:26px;width:15px;height:15px;border-radius:50%;border:3.5px solid #14661e;box-sizing:border-box"></div><div class="a" style="left:48px;top:23px;width:6px;height:4px;background:#f0b040"></div></div>
<div class="a" style="left:1183px;top:999px;width:64px;height:64px;background:#fff;overflow:hidden"><div class="a" style="left:0px;top:0px;width:20px;height:2px;background:#f5c400"></div><div class="a" style="left:0px;top:2px;width:25px;height:62px;background:#fff"></div><div class="a" style="left:25px;top:2px;width:39px;height:62px;background:#ececee"></div><div class="a" style="left:27px;top:10px;width:46px;height:46px;border-radius:50%;background:repeating-radial-gradient(circle,#e85a5a 0 4px,#e04848 4px 5px)"></div><div class="a" style="left:47px;top:30px;width:7px;height:7px;border-radius:50%;background:#fff"></div><div class="a" style="left:58px;top:35px;width:6px;height:5px;background:#e050c0"></div></div>
<div class="a" style="left:1263px;top:999px;width:64px;height:64px;background:#d4d4d4;overflow:hidden"><div class="a" style="left:0px;top:0px;width:64px;height:3px;background:#3a7ad0"></div><div class="a" style="left:0px;top:10px;width:16px;height:16px;background:#8a7f7c"></div><div class="a" style="left:16px;top:10px;width:42px;height:3px;background:repeating-linear-gradient(90deg,#555 0 2px,#d6d6d6 2px 4px)"></div><div class="a" style="left:20px;top:18px;width:30px;height:2px;background:#777"></div><div class="a" style="left:4px;top:30px;width:36px;height:26px;background:#f4f4f4"></div><div class="a" style="left:10px;top:36px;width:26px;height:3px;background:#c8a060"></div><div class="a" style="left:10px;top:44px;width:26px;height:8px;background:#ddd"></div><div class="a" style="left:58px;top:4px;width:6px;height:56px;background:repeating-linear-gradient(#e8e8ff 0 2px,#caa 2px 3px)"></div></div>
<div class="a" style="left:1423px;top:999px;width:64px;height:64px;background:#d4d4d4;overflow:hidden"><div class="a" style="left:0px;top:0px;width:64px;height:3px;background:#3a7ad0"></div><div class="a" style="left:0px;top:10px;width:16px;height:16px;background:#8a7f7c"></div><div class="a" style="left:16px;top:10px;width:42px;height:3px;background:repeating-linear-gradient(90deg,#555 0 2px,#d6d6d6 2px 4px)"></div><div class="a" style="left:20px;top:18px;width:30px;height:2px;background:#777"></div><div class="a" style="left:4px;top:30px;width:36px;height:26px;background:#f4f4f4"></div><div class="a" style="left:10px;top:36px;width:26px;height:3px;background:#c8a060"></div><div class="a" style="left:10px;top:44px;width:26px;height:8px;background:#ddd"></div><div class="a" style="left:58px;top:4px;width:6px;height:56px;background:repeating-linear-gradient(#e8e8ff 0 2px,#caa 2px 3px)"></div></div>
<div class="a" style="left:1343px;top:999px;width:64px;height:64px;background:#d4d4d4;overflow:hidden"><div class="a" style="left:0px;top:0px;width:64px;height:3px;background:#3a7ad0"></div><div class="a" style="left:0px;top:10px;width:16px;height:18px;background:#333"></div><div class="a" style="left:2px;top:12px;width:13px;height:13px;border-radius:50%;background:#e8e8e8"></div><div class="a" style="left:18px;top:12px;width:30px;height:2px;background:#777"></div><div class="a" style="left:0px;top:28px;width:64px;height:36px;background:#c8c8c8"></div><div class="a" style="left:2px;top:56px;width:4px;height:4px;background:#fff"></div><div class="a" style="left:8px;top:56px;width:5px;height:4px;background:#e0c020"></div><div class="a" style="left:14px;top:55px;width:6px;height:6px;background:#5a9ae0"></div><div class="a" style="left:30px;top:56px;width:4px;height:4px;background:#223"></div><div class="a" style="left:60px;top:18px;width:4px;height:30px;background:repeating-linear-gradient(#fc3 0 2px,#ddd 2px 4px)"></div></div>
<div class="a" style="left:1503px;top:999px;width:64px;height:64px;background:#fff;overflow:hidden"><div class="a" style="left:2px;top:3px;width:24px;height:16px;background:repeating-linear-gradient(#fff 0 2px,#c9b 2px 3px)"></div><div class="a" style="left:2px;top:24px;width:44px;height:28px;background:repeating-linear-gradient(#fff 0 3px,#aee8f0 3px 4px)"></div><div class="a" style="left:4px;top:57px;width:8px;height:1px;background:#a4a"></div></div>
<div class="a" style="left:1583px;top:999px;width:64px;height:64px;background:#0a0a0a;overflow:hidden"><div class="a" style="left:0px;top:4px;width:28px;height:4px;background:#b85a08"></div><div class="a" style="left:0px;top:24px;width:28px;height:8px;background:#b85a08"></div><div class="a" style="left:0px;top:16px;width:64px;height:2px;background:#b0a020"></div><div class="a" style="left:0px;top:38px;width:64px;height:4px;background:#b0a020"></div><div class="a" style="left:0px;top:44px;width:64px;height:3px;background:#8a8a20"></div><div class="a" style="left:28px;top:34px;width:36px;height:5px;background:#0a8a20"></div><div class="a" style="left:28px;top:48px;width:36px;height:5px;background:#0a8a20"></div><div class="a" style="left:28px;top:58px;width:36px;height:4px;background:#0a7a20"></div><div class="a" style="left:27px;top:2px;width:1px;height:62px;background:#ccc"></div><div class="a" style="left:30px;top:8px;width:30px;height:2px;background:#ddd"></div><div class="a" style="left:0px;top:50px;width:28px;height:6px;background:#2a2a2a"></div></div>
<div class="a" style="left:1663px;top:999px;width:64px;height:64px;background:#fff;overflow:hidden"><div class="a" style="left:0px;top:0px;width:6px;height:2px;background:#f5c400"></div><div class="a" style="left:0px;top:2px;width:16px;height:62px;background:#f0f0f2"></div><div class="a" style="left:19px;top:9px;width:39px;height:17px;background:#27ae60"></div><div class="a" style="left:40px;top:26px;width:5px;height:3px;background:#27ae60"></div><div class="a" style="left:54px;top:38px;width:10px;height:12px;background:#8e44ad"></div><div class="a" style="left:40px;top:30px;width:10px;height:3px;background:#ddd"></div><div class="a" style="left:54px;top:30px;width:10px;height:3px;background:#ccc"></div></div>
<div class="a" style="left:1743px;top:999px;width:64px;height:64px;background:#fff;overflow:hidden"><div class="a" style="left:0px;top:0px;width:64px;height:2px;background:#3a7ad0"></div><div class="a" style="left:0px;top:6px;width:54px;height:12px;background:#27ae60"></div><div class="a" style="left:30px;top:18px;width:4px;height:2px;background:#27ae60"></div><div class="a" style="left:5px;top:42px;width:29px;height:10px;background:#e8e8e8"></div><div class="a" style="left:5px;top:42px;width:22px;height:2px;background:#f5c400"></div><div class="a" style="left:38px;top:42px;width:26px;height:10px;background:#e8e8e8"></div><div class="a" style="left:28px;top:22px;width:8px;height:2px;background:#ccc"></div></div>
<div class="a" style="left:1823px;top:999px;width:64px;height:64px;background:#fff;overflow:hidden"><div class="a" style="left:0px;top:0px;width:12px;height:3px;background:#f5c400"></div><div class="a" style="left:0px;top:3px;width:64px;height:10px;background:#d8d8d8"></div><div class="a" style="left:0px;top:13px;width:64px;height:16px;background:#fff"></div><div class="a" style="left:0px;top:29px;width:64px;height:2px;background:#b8b8b8"></div><div class="a" style="left:0px;top:31px;width:64px;height:28px;background:#fff"></div><div class="a" style="left:0px;top:59px;width:64px;height:5px;background:#c8c8c8"></div><div class="a" style="left:2px;top:36px;width:3px;height:20px;background:repeating-linear-gradient(#fff 0 3px,#46c 3px 4px)"></div></div>
<div class="a" style="left:1903px;top:999px;width:64px;height:64px;background:#fff;overflow:hidden"><div class="a" style="left:0px;top:0px;width:12px;height:2px;background:#222"></div><div class="a" style="left:2px;top:6px;width:10px;height:50px;background:repeating-linear-gradient(#fff 0 2px,#e86 2px 3px,#fff 3px 4px,#8ad 4px 5px)"></div></div>
</div></div>
</body></html>
